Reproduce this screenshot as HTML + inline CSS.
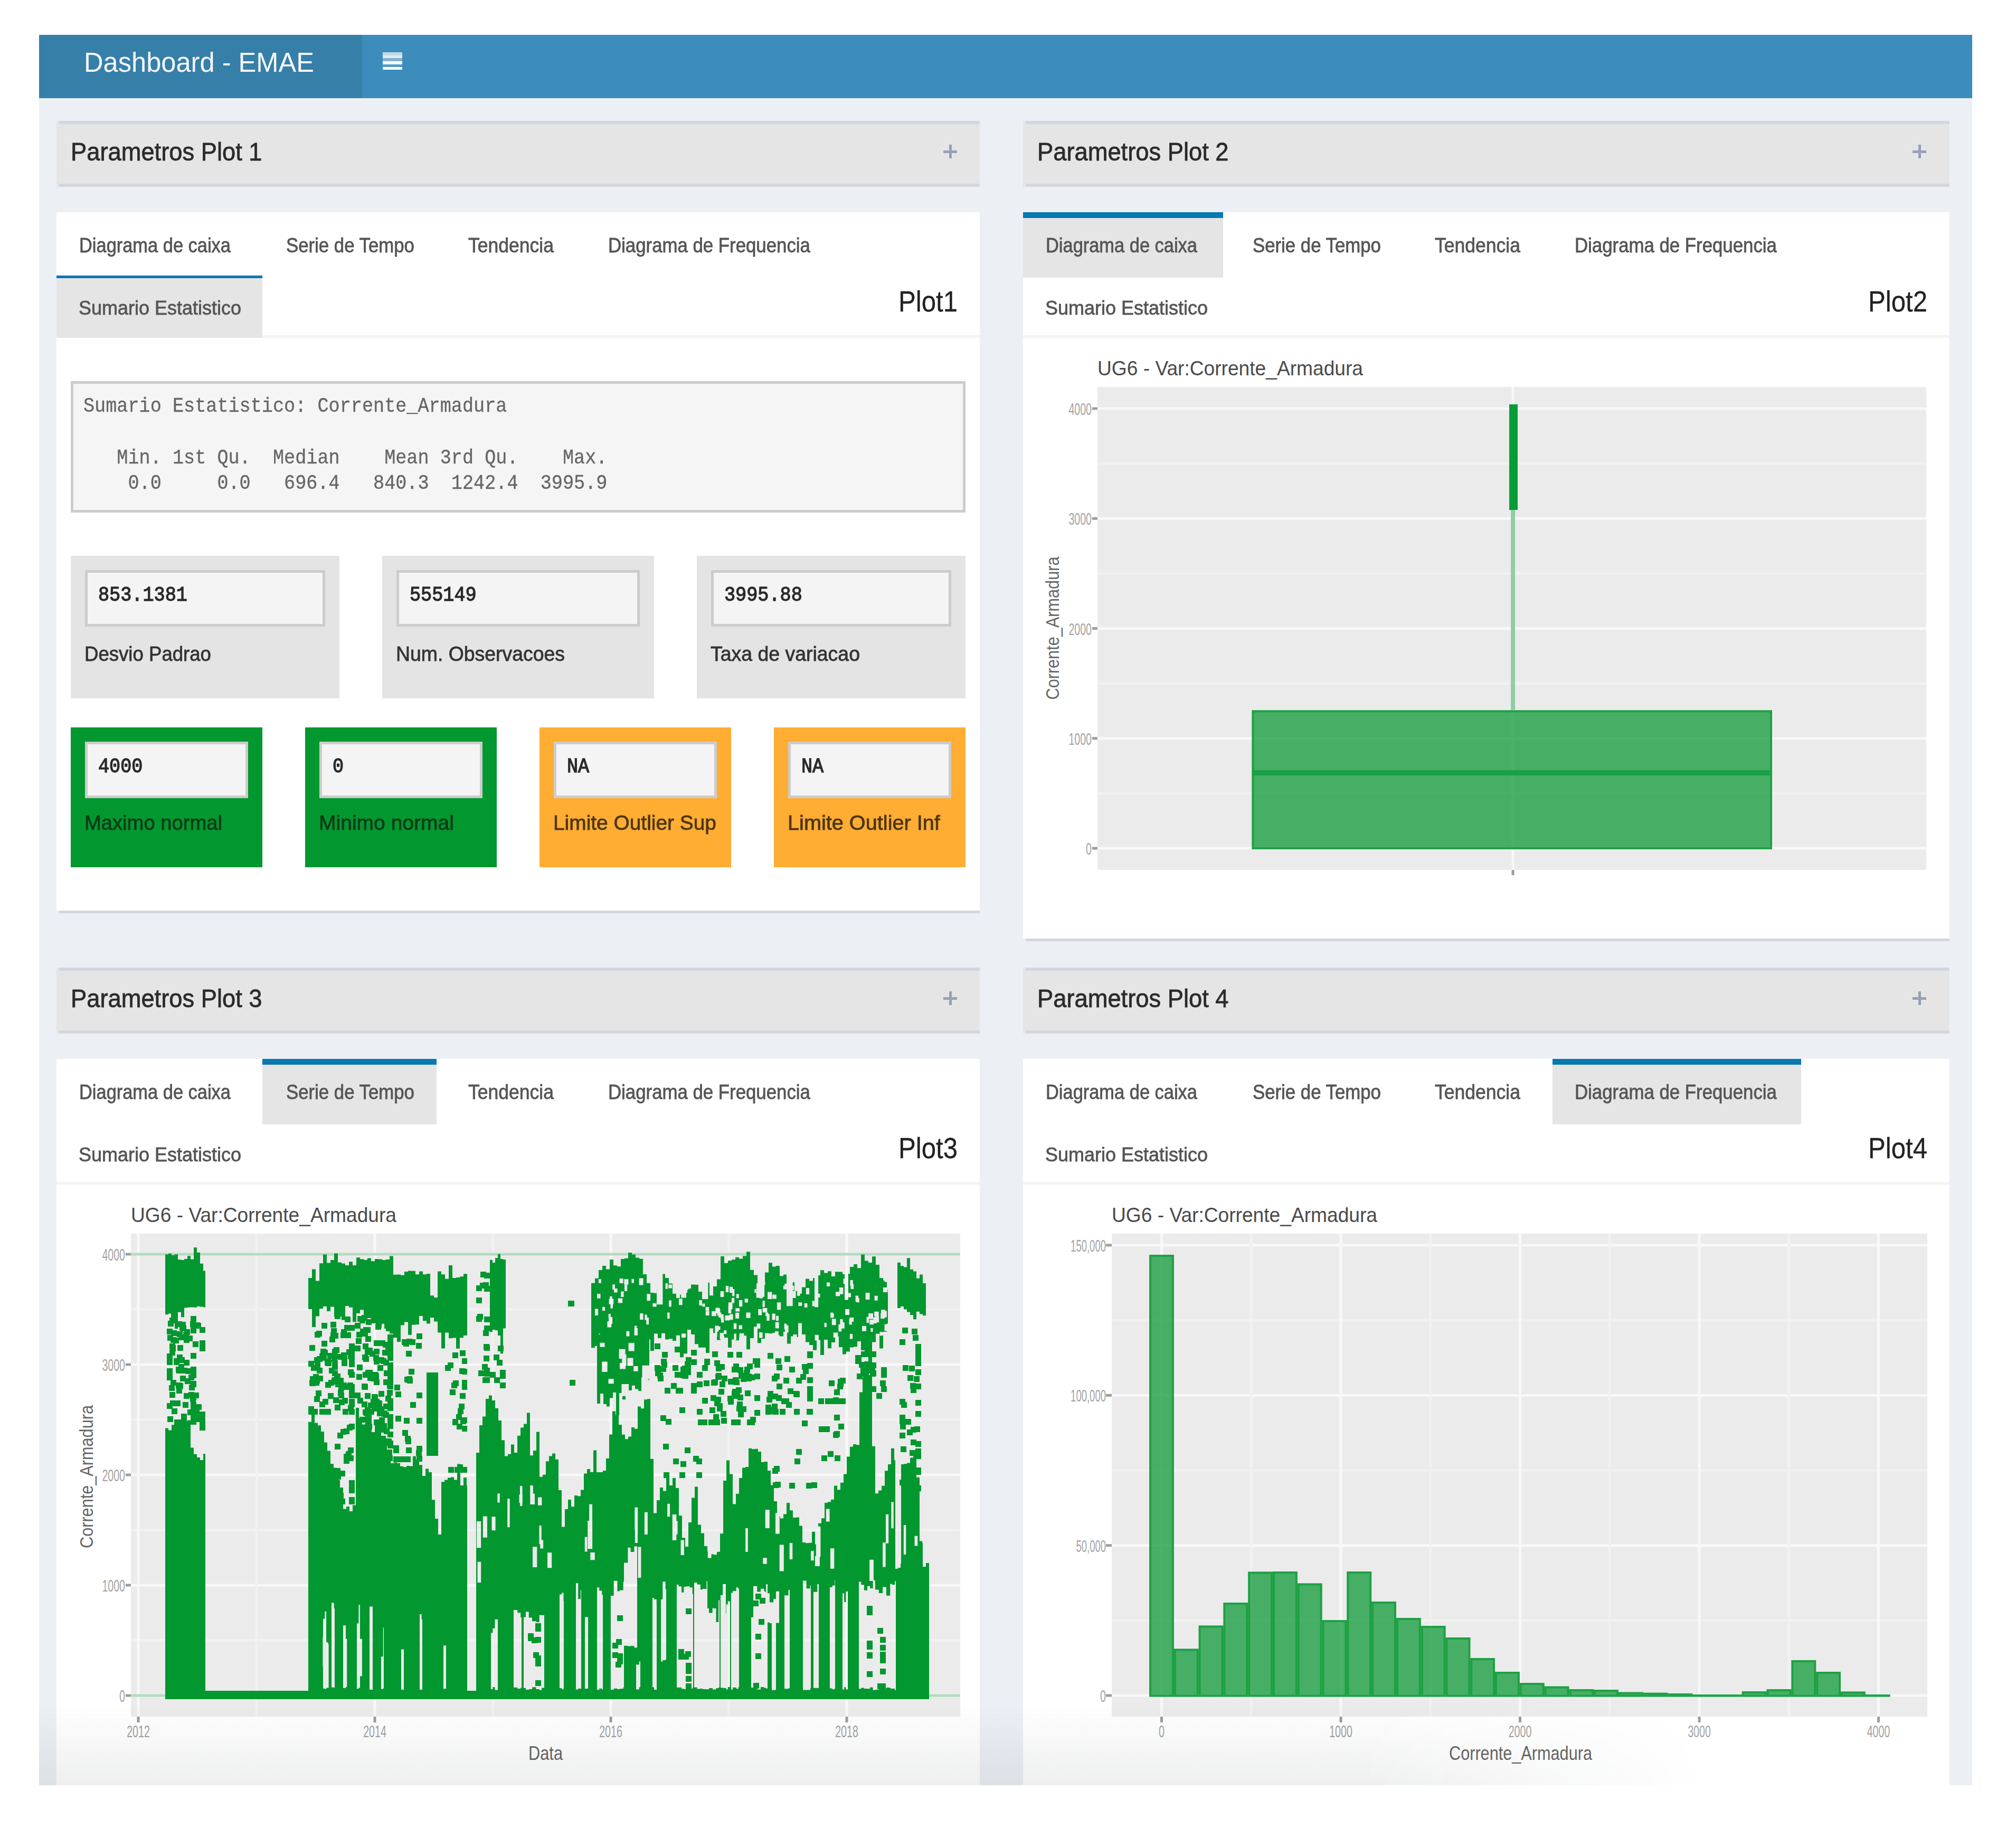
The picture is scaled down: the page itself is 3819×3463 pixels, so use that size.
<!DOCTYPE html>
<html><head><meta charset="utf-8"><title>Dashboard - EMAE</title>
<style>html,body{margin:0;padding:0;background:#ffffff;} body{width:3819px;height:3463px;position:relative;overflow:hidden;font-family:"Liberation Sans", sans-serif;} span{-webkit-text-stroke:0.8px currentColor;} span.m{-webkit-text-stroke:0.3px currentColor;} span.v{-webkit-text-stroke:1.2px currentColor;}</style>
</head><body>
<div style="position:absolute;left:74.0px;top:66.0px;width:612.0px;height:120.0px;background:#367fa9;"></div>
<div style="position:absolute;left:686.0px;top:66.0px;width:3050.0px;height:120.0px;background:#3c8dbc;"></div>
<span style="position:absolute;left:159.0px;top:91.5px;font-family:'Liberation Sans', sans-serif;font-weight:normal;font-size:52.33px;line-height:1;white-space:pre;color:#f4f7fa;transform-origin:0 0;transform:scaleX(0.9672);-webkit-text-stroke:0;">Dashboard - EMAE</span>
<div style="position:absolute;left:725.0px;top:99.0px;width:37.0px;height:5.5px;background:#c3d8e7;"></div>
<div style="position:absolute;left:725.0px;top:104.5px;width:37.0px;height:5.5px;background:#e3ebf2;"></div>
<div style="position:absolute;left:725.0px;top:110.0px;width:37.0px;height:6.0px;background:#80b3d5;"></div>
<div style="position:absolute;left:725.0px;top:116.0px;width:37.0px;height:6.0px;background:#ffffff;"></div>
<div style="position:absolute;left:725.0px;top:122.0px;width:37.0px;height:5.0px;background:#509bc6;"></div>
<div style="position:absolute;left:725.0px;top:127.0px;width:37.0px;height:5.0px;background:#ffffff;"></div>
<div style="position:absolute;left:74.0px;top:186.0px;width:3662.0px;height:3196.0px;background:#ecf0f5;"></div>
<div style="position:absolute;left:107.0px;top:229.0px;width:1749.0px;height:125.0px;background:#e5e5e5;"></div>
<div style="position:absolute;left:112.0px;top:229.0px;width:1744.0px;height:6.0px;background:#d2d6de;"></div>
<div style="position:absolute;left:112.0px;top:348.0px;width:1744.0px;height:6.0px;background:#d4d7dd;"></div>
<span style="position:absolute;left:133.5px;top:264.2px;font-family:'Liberation Sans', sans-serif;font-weight:normal;font-size:47.97px;line-height:1;white-space:pre;color:#2b2b2b;transform-origin:0 0;transform:scaleX(0.9443);">Parametros Plot 1</span>
<div style="position:absolute;left:1787.0px;top:284.5px;width:26.0px;height:5.0px;background:#98a0b3;"></div>
<div style="position:absolute;left:1797.5px;top:274.0px;width:5.0px;height:26.0px;background:#98a0b3;"></div>
<div style="position:absolute;left:107.0px;top:1833.0px;width:1749.0px;height:125.0px;background:#e5e5e5;"></div>
<div style="position:absolute;left:112.0px;top:1833.0px;width:1744.0px;height:6.0px;background:#d2d6de;"></div>
<div style="position:absolute;left:112.0px;top:1952.0px;width:1744.0px;height:6.0px;background:#d4d7dd;"></div>
<span style="position:absolute;left:133.5px;top:1868.2px;font-family:'Liberation Sans', sans-serif;font-weight:normal;font-size:47.97px;line-height:1;white-space:pre;color:#2b2b2b;transform-origin:0 0;transform:scaleX(0.9443);">Parametros Plot 3</span>
<div style="position:absolute;left:1787.0px;top:1888.5px;width:26.0px;height:5.0px;background:#98a0b3;"></div>
<div style="position:absolute;left:1797.5px;top:1878.0px;width:5.0px;height:26.0px;background:#98a0b3;"></div>
<div style="position:absolute;left:1938.0px;top:229.0px;width:1755.0px;height:125.0px;background:#e5e5e5;"></div>
<div style="position:absolute;left:1943.0px;top:229.0px;width:1750.0px;height:6.0px;background:#d2d6de;"></div>
<div style="position:absolute;left:1943.0px;top:348.0px;width:1750.0px;height:6.0px;background:#d4d7dd;"></div>
<span style="position:absolute;left:1964.5px;top:264.2px;font-family:'Liberation Sans', sans-serif;font-weight:normal;font-size:47.97px;line-height:1;white-space:pre;color:#2b2b2b;transform-origin:0 0;transform:scaleX(0.9443);">Parametros Plot 2</span>
<div style="position:absolute;left:3623.0px;top:284.5px;width:26.0px;height:5.0px;background:#98a0b3;"></div>
<div style="position:absolute;left:3633.5px;top:274.0px;width:5.0px;height:26.0px;background:#98a0b3;"></div>
<div style="position:absolute;left:1938.0px;top:1833.0px;width:1755.0px;height:125.0px;background:#e5e5e5;"></div>
<div style="position:absolute;left:1943.0px;top:1833.0px;width:1750.0px;height:6.0px;background:#d2d6de;"></div>
<div style="position:absolute;left:1943.0px;top:1952.0px;width:1750.0px;height:6.0px;background:#d4d7dd;"></div>
<span style="position:absolute;left:1964.5px;top:1868.2px;font-family:'Liberation Sans', sans-serif;font-weight:normal;font-size:47.97px;line-height:1;white-space:pre;color:#2b2b2b;transform-origin:0 0;transform:scaleX(0.9443);">Parametros Plot 4</span>
<div style="position:absolute;left:3623.0px;top:1888.5px;width:26.0px;height:5.0px;background:#98a0b3;"></div>
<div style="position:absolute;left:3633.5px;top:1878.0px;width:5.0px;height:26.0px;background:#98a0b3;"></div>
<div style="position:absolute;left:107.0px;top:402.0px;width:1749.0px;height:1323.0px;background:#ffffff;"></div>
<div style="position:absolute;left:112.0px;top:1725.0px;width:1744.0px;height:5.0px;background:#d2d6de;"></div>
<div style="position:absolute;left:107.0px;top:635.0px;width:1749.0px;height:5.0px;background:#f4f4f4;"></div>
<div style="position:absolute;left:107.0px;top:522.0px;width:390.0px;height:5.0px;background:#0878b0;"></div>
<div style="position:absolute;left:107.0px;top:527.0px;width:390.0px;height:113.0px;background:#e5e5e5;"></div>
<span style="position:absolute;left:150.0px;top:444.6px;font-family:'Liberation Sans', sans-serif;font-weight:normal;font-size:39.24px;line-height:1;white-space:pre;color:#555555;transform-origin:0 0;transform:scaleX(0.8771);">Diagrama de caixa</span>
<span style="position:absolute;left:542.0px;top:444.6px;font-family:'Liberation Sans', sans-serif;font-weight:normal;font-size:39.24px;line-height:1;white-space:pre;color:#555555;transform-origin:0 0;transform:scaleX(0.8863);">Serie de Tempo</span>
<span style="position:absolute;left:887.0px;top:444.6px;font-family:'Liberation Sans', sans-serif;font-weight:normal;font-size:39.24px;line-height:1;white-space:pre;color:#555555;transform-origin:0 0;transform:scaleX(0.9053);">Tendencia</span>
<span style="position:absolute;left:1152.0px;top:444.6px;font-family:'Liberation Sans', sans-serif;font-weight:normal;font-size:39.24px;line-height:1;white-space:pre;color:#555555;transform-origin:0 0;transform:scaleX(0.8867);">Diagrama de Frequencia</span>
<span style="position:absolute;left:149.0px;top:564.9px;font-family:'Liberation Sans', sans-serif;font-weight:normal;font-size:37.79px;line-height:1;white-space:pre;color:#555555;transform-origin:0 0;transform:scaleX(0.9522);">Sumario Estatistico</span>
<span style="position:absolute;left:1702.0px;top:544.1px;font-family:'Liberation Sans', sans-serif;font-weight:normal;font-size:55.23px;line-height:1;white-space:pre;color:#222222;transform-origin:0 0;transform:scaleX(0.8898);-webkit-text-stroke:0.3px #222;">Plot1</span>
<div style="position:absolute;left:1938.0px;top:402.0px;width:1755.0px;height:1376.0px;background:#ffffff;"></div>
<div style="position:absolute;left:1943.0px;top:1778.0px;width:1750.0px;height:5.0px;background:#d2d6de;"></div>
<div style="position:absolute;left:1938.0px;top:635.0px;width:1755.0px;height:5.0px;background:#f4f4f4;"></div>
<div style="position:absolute;left:1938.0px;top:402.0px;width:379.0px;height:11.0px;background:#0878b0;"></div>
<div style="position:absolute;left:1938.0px;top:413.0px;width:379.0px;height:113.0px;background:#e5e5e5;"></div>
<span style="position:absolute;left:1981.0px;top:444.6px;font-family:'Liberation Sans', sans-serif;font-weight:normal;font-size:39.24px;line-height:1;white-space:pre;color:#555555;transform-origin:0 0;transform:scaleX(0.8771);">Diagrama de caixa</span>
<span style="position:absolute;left:2373.0px;top:444.6px;font-family:'Liberation Sans', sans-serif;font-weight:normal;font-size:39.24px;line-height:1;white-space:pre;color:#555555;transform-origin:0 0;transform:scaleX(0.8863);">Serie de Tempo</span>
<span style="position:absolute;left:2718.0px;top:444.6px;font-family:'Liberation Sans', sans-serif;font-weight:normal;font-size:39.24px;line-height:1;white-space:pre;color:#555555;transform-origin:0 0;transform:scaleX(0.9053);">Tendencia</span>
<span style="position:absolute;left:2983.0px;top:444.6px;font-family:'Liberation Sans', sans-serif;font-weight:normal;font-size:39.24px;line-height:1;white-space:pre;color:#555555;transform-origin:0 0;transform:scaleX(0.8867);">Diagrama de Frequencia</span>
<span style="position:absolute;left:1980.0px;top:564.9px;font-family:'Liberation Sans', sans-serif;font-weight:normal;font-size:37.79px;line-height:1;white-space:pre;color:#555555;transform-origin:0 0;transform:scaleX(0.9522);">Sumario Estatistico</span>
<span style="position:absolute;left:3539.0px;top:544.1px;font-family:'Liberation Sans', sans-serif;font-weight:normal;font-size:55.23px;line-height:1;white-space:pre;color:#222222;transform-origin:0 0;transform:scaleX(0.8898);-webkit-text-stroke:0.3px #222;">Plot2</span>
<div style="position:absolute;left:107.0px;top:2006.0px;width:1749.0px;height:1376.0px;background:#ffffff;"></div>
<div style="position:absolute;left:107.0px;top:2239.0px;width:1749.0px;height:5.0px;background:#f4f4f4;"></div>
<div style="position:absolute;left:497.0px;top:2006.0px;width:330.0px;height:11.0px;background:#0878b0;"></div>
<div style="position:absolute;left:497.0px;top:2017.0px;width:330.0px;height:113.0px;background:#e5e5e5;"></div>
<span style="position:absolute;left:150.0px;top:2048.6px;font-family:'Liberation Sans', sans-serif;font-weight:normal;font-size:39.24px;line-height:1;white-space:pre;color:#555555;transform-origin:0 0;transform:scaleX(0.8771);">Diagrama de caixa</span>
<span style="position:absolute;left:542.0px;top:2048.6px;font-family:'Liberation Sans', sans-serif;font-weight:normal;font-size:39.24px;line-height:1;white-space:pre;color:#555555;transform-origin:0 0;transform:scaleX(0.8863);">Serie de Tempo</span>
<span style="position:absolute;left:887.0px;top:2048.6px;font-family:'Liberation Sans', sans-serif;font-weight:normal;font-size:39.24px;line-height:1;white-space:pre;color:#555555;transform-origin:0 0;transform:scaleX(0.9053);">Tendencia</span>
<span style="position:absolute;left:1152.0px;top:2048.6px;font-family:'Liberation Sans', sans-serif;font-weight:normal;font-size:39.24px;line-height:1;white-space:pre;color:#555555;transform-origin:0 0;transform:scaleX(0.8867);">Diagrama de Frequencia</span>
<span style="position:absolute;left:149.0px;top:2168.9px;font-family:'Liberation Sans', sans-serif;font-weight:normal;font-size:37.79px;line-height:1;white-space:pre;color:#555555;transform-origin:0 0;transform:scaleX(0.9522);">Sumario Estatistico</span>
<span style="position:absolute;left:1702.0px;top:2148.1px;font-family:'Liberation Sans', sans-serif;font-weight:normal;font-size:55.23px;line-height:1;white-space:pre;color:#222222;transform-origin:0 0;transform:scaleX(0.8898);-webkit-text-stroke:0.3px #222;">Plot3</span>
<div style="position:absolute;left:1938.0px;top:2006.0px;width:1755.0px;height:1376.0px;background:#ffffff;"></div>
<div style="position:absolute;left:1938.0px;top:2239.0px;width:1755.0px;height:5.0px;background:#f4f4f4;"></div>
<div style="position:absolute;left:2941.0px;top:2006.0px;width:471.0px;height:11.0px;background:#0878b0;"></div>
<div style="position:absolute;left:2941.0px;top:2017.0px;width:471.0px;height:113.0px;background:#e5e5e5;"></div>
<span style="position:absolute;left:1981.0px;top:2048.6px;font-family:'Liberation Sans', sans-serif;font-weight:normal;font-size:39.24px;line-height:1;white-space:pre;color:#555555;transform-origin:0 0;transform:scaleX(0.8771);">Diagrama de caixa</span>
<span style="position:absolute;left:2373.0px;top:2048.6px;font-family:'Liberation Sans', sans-serif;font-weight:normal;font-size:39.24px;line-height:1;white-space:pre;color:#555555;transform-origin:0 0;transform:scaleX(0.8863);">Serie de Tempo</span>
<span style="position:absolute;left:2718.0px;top:2048.6px;font-family:'Liberation Sans', sans-serif;font-weight:normal;font-size:39.24px;line-height:1;white-space:pre;color:#555555;transform-origin:0 0;transform:scaleX(0.9053);">Tendencia</span>
<span style="position:absolute;left:2983.0px;top:2048.6px;font-family:'Liberation Sans', sans-serif;font-weight:normal;font-size:39.24px;line-height:1;white-space:pre;color:#555555;transform-origin:0 0;transform:scaleX(0.8867);">Diagrama de Frequencia</span>
<span style="position:absolute;left:1980.0px;top:2168.9px;font-family:'Liberation Sans', sans-serif;font-weight:normal;font-size:37.79px;line-height:1;white-space:pre;color:#555555;transform-origin:0 0;transform:scaleX(0.9522);">Sumario Estatistico</span>
<span style="position:absolute;left:3539.0px;top:2148.1px;font-family:'Liberation Sans', sans-serif;font-weight:normal;font-size:55.23px;line-height:1;white-space:pre;color:#222222;transform-origin:0 0;transform:scaleX(0.8898);-webkit-text-stroke:0.3px #222;">Plot4</span>
<div style="position:absolute;left:134.0px;top:722.0px;width:1695.0px;height:249.0px;background:#f5f5f5;box-sizing:border-box;border:5px solid #cccccc;"></div>
<span class="m" style="position:absolute;left:158.0px;top:754.2px;font-family:'Liberation Mono', monospace;font-weight:normal;font-size:35.20px;line-height:1;white-space:pre;color:#666666;transform:scaleY(1.08);transform-origin:0 26.8px">Sumario Estatistico: Corrente_Armadura</span>
<span class="m" style="position:absolute;left:158.0px;top:852.2px;font-family:'Liberation Mono', monospace;font-weight:normal;font-size:35.20px;line-height:1;white-space:pre;color:#666666;transform:scaleY(1.08);transform-origin:0 26.8px">   Min. 1st Qu.  Median    Mean 3rd Qu.    Max. </span>
<span class="m" style="position:absolute;left:158.0px;top:900.2px;font-family:'Liberation Mono', monospace;font-weight:normal;font-size:35.20px;line-height:1;white-space:pre;color:#666666;transform:scaleY(1.08);transform-origin:0 26.8px">    0.0     0.0   696.4   840.3  1242.4  3995.9 </span>
<div style="position:absolute;left:134.0px;top:1053.0px;width:509.0px;height:270.0px;background:#e4e4e4;"></div>
<div style="position:absolute;left:161.0px;top:1080.0px;width:455.0px;height:107.0px;background:#f4f4f4;box-sizing:border-box;border:5px solid #cccccc;"></div>
<span class="v" style="position:absolute;left:186.0px;top:1112.2px;font-family:'Liberation Mono', monospace;font-weight:normal;font-size:35.20px;line-height:1;white-space:pre;color:#2a2a2a;transform:scaleY(1.08);transform-origin:0 26.8px">853.1381</span>
<span style="position:absolute;left:160.0px;top:1218.6px;font-family:'Liberation Sans', sans-serif;font-weight:normal;font-size:39.24px;line-height:1;white-space:pre;color:#333333;transform-origin:0 0;transform:scaleX(0.9324);">Desvio Padrao</span>
<div style="position:absolute;left:724.0px;top:1053.0px;width:515.0px;height:270.0px;background:#e4e4e4;"></div>
<div style="position:absolute;left:751.0px;top:1080.0px;width:461.0px;height:107.0px;background:#f4f4f4;box-sizing:border-box;border:5px solid #cccccc;"></div>
<span class="v" style="position:absolute;left:776.0px;top:1112.2px;font-family:'Liberation Mono', monospace;font-weight:normal;font-size:35.20px;line-height:1;white-space:pre;color:#2a2a2a;transform:scaleY(1.08);transform-origin:0 26.8px">555149</span>
<span style="position:absolute;left:750.0px;top:1218.6px;font-family:'Liberation Sans', sans-serif;font-weight:normal;font-size:39.24px;line-height:1;white-space:pre;color:#333333;transform-origin:0 0;transform:scaleX(0.9527);">Num. Observacoes</span>
<div style="position:absolute;left:1320.0px;top:1053.0px;width:509.0px;height:270.0px;background:#e4e4e4;"></div>
<div style="position:absolute;left:1347.0px;top:1080.0px;width:455.0px;height:107.0px;background:#f4f4f4;box-sizing:border-box;border:5px solid #cccccc;"></div>
<span class="v" style="position:absolute;left:1372.0px;top:1112.2px;font-family:'Liberation Mono', monospace;font-weight:normal;font-size:35.20px;line-height:1;white-space:pre;color:#2a2a2a;transform:scaleY(1.08);transform-origin:0 26.8px">3995.88</span>
<span style="position:absolute;left:1346.0px;top:1218.6px;font-family:'Liberation Sans', sans-serif;font-weight:normal;font-size:39.24px;line-height:1;white-space:pre;color:#333333;transform-origin:0 0;transform:scaleX(0.9539);">Taxa de variacao</span>
<div style="position:absolute;left:134.0px;top:1378.0px;width:363.0px;height:265.0px;background:#03972f;"></div>
<div style="position:absolute;left:161.0px;top:1405.0px;width:309.0px;height:107.0px;background:#f4f4f4;box-sizing:border-box;border:5px solid #cccccc;"></div>
<span class="v" style="position:absolute;left:186.0px;top:1437.2px;font-family:'Liberation Mono', monospace;font-weight:normal;font-size:35.20px;line-height:1;white-space:pre;color:#2a2a2a;transform:scaleY(1.08);transform-origin:0 26.8px">4000</span>
<span style="position:absolute;left:160.0px;top:1538.6px;font-family:'Liberation Sans', sans-serif;font-weight:normal;font-size:39.24px;line-height:1;white-space:pre;color:#0b3d19;transform-origin:0 0;transform:scaleX(0.9730);">Maximo normal</span>
<div style="position:absolute;left:578.0px;top:1378.0px;width:363.0px;height:265.0px;background:#03972f;"></div>
<div style="position:absolute;left:605.0px;top:1405.0px;width:309.0px;height:107.0px;background:#f4f4f4;box-sizing:border-box;border:5px solid #cccccc;"></div>
<span class="v" style="position:absolute;left:630.0px;top:1437.2px;font-family:'Liberation Mono', monospace;font-weight:normal;font-size:35.20px;line-height:1;white-space:pre;color:#2a2a2a;transform:scaleY(1.08);transform-origin:0 26.8px">0</span>
<span style="position:absolute;left:604.0px;top:1538.6px;font-family:'Liberation Sans', sans-serif;font-weight:normal;font-size:39.24px;line-height:1;white-space:pre;color:#0b3d19;transform-origin:0 0;transform:scaleX(0.9949);">Minimo normal</span>
<div style="position:absolute;left:1022.0px;top:1378.0px;width:363.0px;height:265.0px;background:#ffad33;"></div>
<div style="position:absolute;left:1049.0px;top:1405.0px;width:309.0px;height:107.0px;background:#f4f4f4;box-sizing:border-box;border:5px solid #cccccc;"></div>
<span class="v" style="position:absolute;left:1074.0px;top:1437.2px;font-family:'Liberation Mono', monospace;font-weight:normal;font-size:35.20px;line-height:1;white-space:pre;color:#2a2a2a;transform:scaleY(1.08);transform-origin:0 26.8px">NA</span>
<span style="position:absolute;left:1048.0px;top:1538.6px;font-family:'Liberation Sans', sans-serif;font-weight:normal;font-size:39.24px;line-height:1;white-space:pre;color:#4d3510;transform-origin:0 0;transform:scaleX(0.9907);">Limite Outlier Sup</span>
<div style="position:absolute;left:1466.0px;top:1378.0px;width:363.0px;height:265.0px;background:#ffad33;"></div>
<div style="position:absolute;left:1493.0px;top:1405.0px;width:309.0px;height:107.0px;background:#f4f4f4;box-sizing:border-box;border:5px solid #cccccc;"></div>
<span class="v" style="position:absolute;left:1518.0px;top:1437.2px;font-family:'Liberation Mono', monospace;font-weight:normal;font-size:35.20px;line-height:1;white-space:pre;color:#2a2a2a;transform:scaleY(1.08);transform-origin:0 26.8px">NA</span>
<span style="position:absolute;left:1492.0px;top:1538.6px;font-family:'Liberation Sans', sans-serif;font-weight:normal;font-size:39.24px;line-height:1;white-space:pre;color:#4d3510;transform-origin:0 0;transform:scaleX(1.0113);">Limite Outlier Inf</span>
<svg width="3819" height="3463" style="position:absolute;left:0;top:0" font-family="Liberation Sans, sans-serif"><rect x="2079.0" y="733.0" width="1570.0" height="915.0" fill="#ebebeb" />
<rect x="2079.0" y="1500.4" width="1570.0" height="5.0" fill="#f1f1f1" />
<rect x="2079.0" y="1292.1" width="1570.0" height="5.0" fill="#f1f1f1" />
<rect x="2079.0" y="1083.9" width="1570.0" height="5.0" fill="#f1f1f1" />
<rect x="2079.0" y="875.6" width="1570.0" height="5.0" fill="#f1f1f1" />
<rect x="2079.0" y="1604.5" width="1570.0" height="5.0" fill="#f8f8f8" />
<rect x="2079.0" y="1396.2" width="1570.0" height="5.0" fill="#f8f8f8" />
<rect x="2079.0" y="1188.0" width="1570.0" height="5.0" fill="#f8f8f8" />
<rect x="2079.0" y="979.8" width="1570.0" height="5.0" fill="#f8f8f8" />
<rect x="2079.0" y="771.5" width="1570.0" height="5.0" fill="#f8f8f8" />
<rect x="2863.5" y="733.0" width="5.0" height="915.0" fill="#f8f8f8" />
<text x="2068.0" y="1619.0" font-size="30.71" fill="#a3a3a3" text-anchor="end" textLength="10.9" lengthAdjust="spacingAndGlyphs" >0</text>
<rect x="2069.0" y="1604.5" width="10.0" height="5.0" fill="#9d9d9d" />
<text x="2068.0" y="1410.8" font-size="30.71" fill="#a3a3a3" text-anchor="end" textLength="43.6" lengthAdjust="spacingAndGlyphs" >1000</text>
<rect x="2069.0" y="1396.2" width="10.0" height="5.0" fill="#9d9d9d" />
<text x="2068.0" y="1202.5" font-size="30.71" fill="#a3a3a3" text-anchor="end" textLength="43.6" lengthAdjust="spacingAndGlyphs" >2000</text>
<rect x="2069.0" y="1188.0" width="10.0" height="5.0" fill="#9d9d9d" />
<text x="2068.0" y="994.2" font-size="30.71" fill="#a3a3a3" text-anchor="end" textLength="43.6" lengthAdjust="spacingAndGlyphs" >3000</text>
<rect x="2069.0" y="979.8" width="10.0" height="5.0" fill="#9d9d9d" />
<text x="2068.0" y="786.0" font-size="30.71" fill="#a3a3a3" text-anchor="end" textLength="43.6" lengthAdjust="spacingAndGlyphs" >4000</text>
<rect x="2069.0" y="771.5" width="10.0" height="5.0" fill="#9d9d9d" />
<rect x="2863.5" y="1648.0" width="5.0" height="10.0" fill="#9d9d9d" />
<rect x="2371.5" y="1345.5" width="985.5" height="263.5" fill="#03972f" fill-opacity="0.71"/>
<rect x="2373.5" y="1347.5" width="981.5" height="259.5" fill="none" stroke="#03972f" stroke-opacity="0.6" stroke-width="4"/>
<rect x="2371.5" y="1459.0" width="985.5" height="10.0" fill="#1aa046" />
<rect x="2862.0" y="966.0" width="8.0" height="379.5" fill="#8fcea2" />
<rect x="2859.0" y="766.0" width="16.0" height="200.0" fill="#069c36" />
<text x="2079.0" y="711.0" font-size="39.00" fill="#4a4a4a" text-anchor="start" textLength="503.0" lengthAdjust="spacingAndGlyphs" >UG6 - Var:Corrente_Armadura</text>
<text transform="translate(2006.0,1190.0) rotate(-90)" x="0" y="0" font-size="35.00" fill="#666666" text-anchor="middle" textLength="271.0" lengthAdjust="spacingAndGlyphs">Corrente_Armadura</text>
<rect x="248.0" y="2337.0" width="1571.0" height="915.0" fill="#ebebeb" />
<rect x="248.0" y="3105.0" width="1571.0" height="5.0" fill="#f1f1f1" />
<rect x="248.0" y="2896.0" width="1571.0" height="5.0" fill="#f1f1f1" />
<rect x="248.0" y="2687.0" width="1571.0" height="5.0" fill="#f1f1f1" />
<rect x="248.0" y="2478.0" width="1571.0" height="5.0" fill="#f1f1f1" />
<rect x="248.0" y="3209.5" width="1571.0" height="5.0" fill="#f8f8f8" />
<rect x="248.0" y="3000.5" width="1571.0" height="5.0" fill="#f8f8f8" />
<rect x="248.0" y="2791.5" width="1571.0" height="5.0" fill="#f8f8f8" />
<rect x="248.0" y="2582.5" width="1571.0" height="5.0" fill="#f8f8f8" />
<rect x="248.0" y="2373.5" width="1571.0" height="5.0" fill="#f8f8f8" />
<rect x="483.5" y="2337.0" width="5.0" height="915.0" fill="#f1f1f1" />
<rect x="931.0" y="2337.0" width="5.0" height="915.0" fill="#f1f1f1" />
<rect x="1378.0" y="2337.0" width="5.0" height="915.0" fill="#f1f1f1" />
<rect x="259.5" y="2337.0" width="5.0" height="915.0" fill="#f8f8f8" />
<rect x="707.5" y="2337.0" width="5.0" height="915.0" fill="#f8f8f8" />
<rect x="1154.5" y="2337.0" width="5.0" height="915.0" fill="#f8f8f8" />
<rect x="1601.5" y="2337.0" width="5.0" height="915.0" fill="#f8f8f8" />
<text x="237.0" y="3224.0" font-size="30.71" fill="#a3a3a3" text-anchor="end" textLength="10.9" lengthAdjust="spacingAndGlyphs" >0</text>
<rect x="238.0" y="3209.5" width="10.0" height="5.0" fill="#9d9d9d" />
<text x="237.0" y="3015.0" font-size="30.71" fill="#a3a3a3" text-anchor="end" textLength="43.6" lengthAdjust="spacingAndGlyphs" >1000</text>
<rect x="238.0" y="3000.5" width="10.0" height="5.0" fill="#9d9d9d" />
<text x="237.0" y="2806.0" font-size="30.71" fill="#a3a3a3" text-anchor="end" textLength="43.6" lengthAdjust="spacingAndGlyphs" >2000</text>
<rect x="238.0" y="2791.5" width="10.0" height="5.0" fill="#9d9d9d" />
<text x="237.0" y="2597.0" font-size="30.71" fill="#a3a3a3" text-anchor="end" textLength="43.6" lengthAdjust="spacingAndGlyphs" >3000</text>
<rect x="238.0" y="2582.5" width="10.0" height="5.0" fill="#9d9d9d" />
<text x="237.0" y="2388.0" font-size="30.71" fill="#a3a3a3" text-anchor="end" textLength="43.6" lengthAdjust="spacingAndGlyphs" >4000</text>
<rect x="238.0" y="2373.5" width="10.0" height="5.0" fill="#9d9d9d" />
<rect x="259.5" y="3252.0" width="5.0" height="11.0" fill="#9d9d9d" />
<text x="262.0" y="3291.0" font-size="30.71" fill="#a3a3a3" text-anchor="middle" textLength="43.6" lengthAdjust="spacingAndGlyphs" >2012</text>
<rect x="707.5" y="3252.0" width="5.0" height="11.0" fill="#9d9d9d" />
<text x="710.0" y="3291.0" font-size="30.71" fill="#a3a3a3" text-anchor="middle" textLength="43.6" lengthAdjust="spacingAndGlyphs" >2014</text>
<rect x="1154.5" y="3252.0" width="5.0" height="11.0" fill="#9d9d9d" />
<text x="1157.0" y="3291.0" font-size="30.71" fill="#a3a3a3" text-anchor="middle" textLength="43.6" lengthAdjust="spacingAndGlyphs" >2016</text>
<rect x="1601.5" y="3252.0" width="5.0" height="11.0" fill="#9d9d9d" />
<text x="1604.0" y="3291.0" font-size="30.71" fill="#a3a3a3" text-anchor="middle" textLength="43.6" lengthAdjust="spacingAndGlyphs" >2018</text>
<text x="248.0" y="2315.0" font-size="39.00" fill="#4a4a4a" text-anchor="start" textLength="503.0" lengthAdjust="spacingAndGlyphs" >UG6 - Var:Corrente_Armadura</text>
<text x="1033.5" y="3333.5" font-size="36.50" fill="#666666" text-anchor="middle" textLength="65.0" lengthAdjust="spacingAndGlyphs" >Data</text>
<text transform="translate(175.5,2797.5) rotate(-90)" x="0" y="0" font-size="35.00" fill="#666666" text-anchor="middle" textLength="271.0" lengthAdjust="spacingAndGlyphs">Corrente_Armadura</text>
<rect x="248" y="2373.5" width="1571" height="5" fill="#b3dcbf"/><rect x="248" y="3209.5" width="1571" height="5" fill="#b3dcbf"/>
<mask id="scm" maskUnits="userSpaceOnUse" x="240" y="2330" width="1590" height="930"><rect x="240" y="2330" width="1590" height="930" fill="#fff"/><path fill="#000" d="M615.8 3114.5h6.8v83.1h-6.8zM611.4 3100.9h5.9v55.9h-5.9zM616.5 3111.3h5.1v55.2h-5.1zM614.7 3108.8h3.5v69.1h-3.5zM681.8 3104.7h4.1v70.6h-4.1zM650.8 3104.7h6.4v91.3h-6.4zM885.0 2337.0H902.0V3203.0H885.0zM930.0 3093.5H933.5V3200.1H930.0zM933.5 3084.8H937.5V3196.1H933.5zM937.5 3067.8H943.0V3201.6H937.5zM973.0 3050.1H980.3V3196.8H973.0zM980.3 3055.3H986.2V3199.0H980.3zM986.2 3064.0H988.0V3197.2H986.2zM992.0 3063.6H996.1V3197.8H992.0zM996.1 3053.5H1001.7V3200.9H996.1zM1001.7 3064.6H1008.0V3200.0H1001.7zM1008.0 3071.3H1015.6V3196.3H1008.0zM1015.6 3072.9H1021.7V3200.0H1015.6zM1021.7 3059.7H1026.1V3201.8H1021.7zM1026.1 3060.1H1031.0V3197.5H1026.1zM1091.0 2999.0H1095.2V3200.6H1091.0zM1095.2 3029.3H1099.9V3198.8H1095.2zM1099.9 3012.2H1101.0V3199.6H1099.9zM1131.0 3007.2H1135.2V3201.3H1131.0zM1135.2 3013.6H1140.3V3198.7H1135.2zM1140.3 3021.2H1142.0V3200.5H1140.3zM1157.0 3022.9H1162.7V3200.9H1157.0zM1162.7 2994.7H1169.5V3198.7H1162.7zM1169.5 3014.6H1173.9V3200.1H1169.5zM1173.9 3012.4H1180.7V3199.3H1173.9zM1180.7 2996.2H1182.0V3196.3H1180.7zM1182.0 2960.5H1189.4V3117.8H1182.0zM1189.4 2931.8H1194.6V3118.6H1189.4zM1194.6 2940.1H1201.4V3117.9H1194.6zM1201.4 2929.4H1207.0V3121.2H1201.4zM1252.0 3030.1H1255.3V3147.7H1252.0zM1255.3 2996.2H1260.6V3144.9H1255.3zM1260.6 3010.6H1262.0V3144.1H1260.6zM1282.0 3002.1H1285.6V3196.8H1282.0zM1285.6 3005.3H1291.1V3196.7H1285.6zM1291.1 3016.7H1295.4V3199.3H1291.1zM1295.4 3006.1H1300.3V3200.1H1295.4zM1300.3 3005.3H1306.4V3197.4H1300.3zM1306.4 3007.2H1311.7V3199.3H1306.4zM1311.7 3019.9H1313.0V3197.3H1311.7zM1338.0 3047.1H1343.0V3200.2H1338.0zM1343.0 3055.5H1349.6V3198.0H1343.0zM1349.6 3046.6H1352.0V3197.4H1349.6zM1370.0 3056.4H1375.7V3197.7H1370.0zM1375.7 3039.5H1378.8V3200.4H1375.7zM1378.8 3033.6H1383.0V3196.0H1378.8zM1423.0 3063.7H1427.0V3197.1H1423.0zM1427.0 3004.7H1434.2V3197.7H1427.0zM1434.2 3015.4H1441.0V3200.5H1434.2zM1441.0 3009.8H1447.5V3196.1H1441.0zM1447.5 3016.4H1451.2V3197.6H1447.5zM1451.2 3001.2H1454.0V3198.8H1451.2zM1315.0 2998.0H1320.5V3196.6H1315.0zM1320.5 3001.7H1326.8V3199.5H1320.5zM1326.8 3011.2H1330.5V3198.8H1326.8zM1330.5 3010.1H1338.5V3199.9H1330.5zM1338.5 2995.3H1340.0V3197.8H1338.5zM1350.0 3046.9H1356.5V3200.4H1350.0zM1356.5 3073.1H1361.2V3198.1H1356.5zM1361.2 3031.3H1363.0V3196.4H1361.2zM1365.0 3021.8H1369.2V3197.2H1365.0zM1369.2 3000.9H1375.0V3197.8H1369.2zM1385.0 3017.6H1388.1V3200.7H1385.0zM1388.1 3014.0H1394.7V3196.7H1388.1zM1394.7 3007.2H1398.7V3199.3H1394.7zM1398.7 3010.1H1400.0V3196.1H1398.7zM1446.0 3014.7H1450.1V3075.1H1446.0zM1450.1 3018.2H1457.9V3073.4H1450.1zM1457.9 3035.5H1465.1V3075.0H1457.9zM1465.1 3029.2H1469.9V3070.7H1465.1zM1469.9 3014.8H1476.0V3074.6H1469.9zM1521.0 2994.4H1527.6V3201.6H1521.0zM1527.6 3009.3H1534.8V3201.4H1527.6zM1534.8 3003.6H1536.0V3198.4H1534.8zM1541.0 3015.7H1548.3V3197.8H1541.0zM1548.3 3001.2H1551.0V3197.8H1548.3zM1572.0 3007.0H1576.6V3198.6H1572.0zM1576.6 3003.8H1581.4V3200.2H1576.6zM1581.4 2993.5H1582.0V3198.4H1581.4zM1627.0 2996.4H1631.3V3199.2H1627.0zM1631.3 3002.4H1636.9V3197.5H1631.3zM1636.9 3012.8H1643.0V3199.0H1636.9zM1643.0 3004.7H1648.1V3199.2H1643.0zM1648.1 3009.0H1653.7V3196.6H1648.1zM1653.7 2993.7H1657.8V3201.8H1653.7zM1657.8 3011.6H1664.8V3200.9H1657.8zM1664.8 3018.1H1672.2V3197.8H1664.8zM1672.2 3006.6H1678.9V3198.7H1672.2zM1678.9 3022.7H1686.3V3197.0H1678.9zM1686.3 3000.4H1689.7V3198.7H1686.3zM1689.7 3002.3H1695.2V3198.9H1689.7zM1695.2 2995.3H1697.0V3201.9H1695.2zM1697.0 2340.7H1700.7V2965.3H1697.0zM1700.7 2357.2H1706.6V2961.4H1700.7zM1706.6 2346.5H1707.0V2963.2H1706.6zM1486.0 3022.2H1493.5V3199.3H1486.0zM1493.5 3012.1H1496.0V3198.2H1493.5zM1596.0 3018.6H1599.1V3200.7H1596.0zM1599.1 3034.9H1602.5V3196.3H1599.1zM1602.5 3015.0H1606.0V3200.4H1602.5zM1462.0 3053.7H1469.1V3201.7H1462.0zM1469.1 3055.9H1470.0V3200.8H1469.1zM1236.0 3026.9H1239.1V3196.3H1236.0zM1239.1 3029.8H1243.8V3200.9H1239.1zM1243.8 3040.5H1244.0V3201.7H1243.8zM1205.0 3153.5H1210.8V3200.5H1205.0zM1210.8 3147.6H1213.0V3196.2H1210.8zM1060.0 3020.4H1064.2V3198.0H1060.0zM1064.2 3017.6H1067.5V3200.3H1064.2zM1067.5 3033.0H1068.0V3198.0H1067.5zM1108.0 3063.5H1114.0V3199.0H1108.0zM612.0 3066.8H615.3V3198.8H612.0zM615.3 3052.8H618.0V3199.8H615.3zM628.0 3036.4H632.7V3196.5H628.0zM632.7 3047.0H634.0V3197.4H632.7zM650.0 3079.2H655.0V3197.7H650.0zM676.0 3075.5H679.4V3199.2H676.0zM679.4 3040.6H682.0V3197.4H679.4zM700.0 3043.5H706.0V3201.1H700.0zM722.0 3138.2H725.8V3199.7H722.0zM725.8 3083.4H727.0V3198.4H725.8zM760.0 3124.6H765.0V3200.9H760.0zM795.0 3058.0H798.6V3201.0H795.0zM798.6 3068.1H800.0V3201.1H798.6zM840.0 3117.2H845.0V3199.2H840.0zM1711.9 2888.9h4.4v56.2h-4.4zM1672.1 2922.3h5.6v46.2h-5.6zM1021.5 2890.0h4.2v35.2h-4.2zM1113.3 2881.0h8.8v53.2h-8.8zM1536.0 2937.9h5.6v18.4h-5.6zM1495.6 2923.0h5.7v31.0h-5.7zM983.5 2831.2h6.3v15.9h-6.3zM1449.7 2860.2h8.1v34.8h-8.1zM1732.5 2909.7h5.8v18.8h-5.8zM1412.2 2895.0h4.6v45.1h-4.6zM1647.1 2954.7h7.8v40.4h-7.8zM1220.9 2864.7h6.0v42.4h-6.0zM1202.4 2855.5h5.8v42.4h-5.8zM1476.6 2926.6h8.2v50.0h-8.2zM1116.1 2849.8h5.9v42.1h-5.9zM1688.3 2845.4h4.5v49.9h-4.5zM1023.2 2917.5h5.9v15.9h-5.9zM1118.3 2941.0h8.5v14.2h-8.5zM1202.9 2869.2h5.1v53.9h-5.1zM1264.1 2848.8h5.0v24.5h-5.0zM1445.2 2951.3h7.6v11.5h-7.6zM1004.2 2814.0h5.6v19.6h-5.6zM914.9 2872.5h8.0v40.2h-8.0zM931.6 2873.3h7.0v26.0h-7.0zM1208.6 2930.4h5.8v58.6h-5.8zM1009.0 2930.3h8.3v38.7h-8.3zM985.0 2815.0h4.5v37.9h-4.5zM1747.1 2905.3h6.1v17.8h-6.1zM1545.9 2891.8h8.5v57.8h-8.5zM1472.1 2823.9h6.4v48.9h-6.4zM1340.8 2920.8h6.7v30.7h-6.7zM1572.9 2933.3h7.4v38.5h-7.4zM942.3 2829.3h4.5v17.3h-4.5zM1274.8 2881.2h8.8v25.5h-8.8zM1564.8 2858.4h6.8v24.0h-6.8zM903.0 2882.1h8.2v50.2h-8.2zM961.2 2839.0h4.5v54.2h-4.5zM1469.0 2866.3h7.8v39.5h-7.8zM1295.7 2846.3h6.6v20.2h-6.6zM1019.0 2836.5h7.4v15.3h-7.4zM904.5 2958.8h6.7v39.1h-6.7zM1037.0 2941.2h8.2v29.0h-8.2zM1544.0 2948.1h8.9v18.9h-8.9zM1004.3 2829.5h8.7v20.4h-8.7zM1678.0 2868.7h5.2v55.0h-5.2zM1107.8 2911.8h4.6v27.6h-4.6zM1273.7 2869.1h7.6v48.8h-7.6zM1289.6 2917.5h6.3v28.5h-6.3z"/></mask>
<path fill="#03972f" mask="url(#scm)" d="M313.0 3203.0H1760.0V3219.0H313.0zM313.0 2705.5h6.0V3219h-6.0zM319.0 2709.5h6.0V3219h-6.0zM325.0 2699.3h6.0V3219h-6.0zM331.0 2692.0h6.0V3219h-6.0zM337.0 2697.6h6.0V3219h-6.0zM343.0 2687.5h6.0V3219h-6.0zM349.0 2692.5h6.0V3219h-6.0zM355.0 2690.5h6.0V3219h-6.0zM361.0 2742.4h6.0V3219h-6.0zM367.0 2754.8h6.0V3219h-6.0zM373.0 2761.0h6.0V3219h-6.0zM379.0 2766.0h6.0V3219h-6.0zM385.0 2754.2h4.0V3219h-4.0zM313.0 2376.3h6.0V2490.2h-6.0zM319.0 2374.8h6.0V2488.5h-6.0zM325.0 2377.7h6.0V2495.7h-6.0zM331.0 2376.3h6.0V2517.2h-6.0zM337.0 2386.3h6.0V2485.7h-6.0zM343.0 2387.0h6.0V2495.2h-6.0zM349.0 2385.1h6.0V2477.5h-6.0zM355.0 2379.2h6.0V2476.8h-6.0zM361.0 2385.8h6.0V2476.4h-6.0zM367.0 2363.3h6.0V2476.7h-6.0zM373.0 2372.8h6.0V2474.7h-6.0zM379.0 2393.7h6.0V2475.4h-6.0zM385.0 2407.6h4.0V2476.4h-4.0zM339 2571h11v11h-11zM361 2656h11v11h-11zM340 2510h11v11h-11zM361 2595h11v11h-11zM352 2592h11v11h-11zM361 2515h11v11h-11zM360 2645h11v11h-11zM328 2534h11v11h-11zM336 2548h11v11h-11zM361 2589h11v11h-11zM350 2611h11v11h-11zM349 2518h11v11h-11zM316 2575h11v11h-11zM348 2576h11v11h-11zM323 2533h11v11h-11zM316 2604h11v11h-11zM357 2637h11v11h-11zM361 2563h11v11h-11zM361 2673h11v11h-11zM361 2667h11v11h-11zM334 2689h11v11h-11zM320 2624h11v11h-11zM361 2642h11v11h-11zM321 2496h11v11h-11zM357 2604h11v11h-11zM361 2593h11v11h-11zM322 2653h11v11h-11zM343 2678h11v11h-11zM317 2683h11v11h-11zM324 2488h11v11h-11zM334 2629h11v11h-11zM329 2573h11v11h-11zM316 2564h11v11h-11zM330 2689h11v11h-11zM318 2502h11v11h-11zM361 2512h11v11h-11zM335 2522h11v11h-11zM337 2689h11v11h-11zM341 2504h11v11h-11zM361 2600h11v11h-11zM348 2533h11v11h-11zM339 2528h11v11h-11zM331 2653h11v11h-11zM361 2512h11v11h-11zM322 2548h11v11h-11zM354 2530h11v11h-11zM316 2658h11v11h-11zM333 2589h11v11h-11zM342 2511h11v11h-11zM325 2668h11v11h-11zM329 2575h11v11h-11zM338 2584h11v11h-11zM316 2594h11v11h-11zM361 2688h11v11h-11zM355 2670h11v11h-11zM361 2684h11v11h-11zM360 2503h11v11h-11zM346 2656h11v11h-11zM334 2503h11v11h-11zM321 2637h11v11h-11zM333 2619h11v11h-11zM334 2591h11v11h-11zM324 2520h11v11h-11zM316 2517h11v11h-11zM316 2598h11v11h-11zM341 2606h11v11h-11zM347 2523h11v11h-11zM336 2620h11v11h-11zM361 2617h11v11h-11zM339 2689h11v11h-11zM322 2549h11v11h-11zM358 2623h11v11h-11zM316 2592h11v11h-11zM361 2616h11v11h-11zM344 2591h11v11h-11zM321 2545h11v11h-11zM323 2614h11v11h-11zM335 2566h11v11h-11zM317 2529h11v11h-11zM343 2689h11v11h-11zM348 2639h11v11h-11zM321 2557h11v11h-11zM361 2493h11v11h-11zM378 2549h11v11h-11zM365 2541h11v11h-11zM378 2514h11v11h-11zM378 2549h11v11h-11zM378 2539h11v11h-11zM370 2506h11v11h-11zM368 2505h11v11h-11zM370 2677h11v11h-11zM367 2671h11v11h-11zM378 2688h11v11h-11zM377 2682h11v11h-11zM371 2660h11v11h-11zM378 2699h11v11h-11zM378 2674h11v11h-11zM378 2699h11v11h-11zM378 2686h11v11h-11zM367 2683h11v11h-11zM378 2692h11v11h-11zM366 2638h11v11h-11zM584.0 2420.9h7.0V2479.9h-7.0zM591.0 2404.6h7.0V2514.0h-7.0zM598.0 2426.5h7.0V2493.6h-7.0zM605.0 2393.3h7.0V2479.2h-7.0zM612.0 2376.5h7.0V2474.8h-7.0zM619.0 2392.6h7.0V2483.9h-7.0zM626.0 2386.9h7.0V2475.4h-7.0zM633.0 2374.4h7.0V2494.8h-7.0zM640.0 2391.6h7.0V2494.1h-7.0zM647.0 2393.6h7.0V2500.8h-7.0zM654.0 2397.0h7.0V2473.9h-7.0zM661.0 2390.2h7.0V2476.7h-7.0zM668.0 2397.1h7.0V2504.3h-7.0zM675.0 2382.3h7.0V2487.9h-7.0zM682.0 2385.2h7.0V2481.6h-7.0zM689.0 2386.7h7.0V2499.5h-7.0zM696.0 2383.6h7.0V2497.0h-7.0zM703.0 2389.3h7.0V2506.9h-7.0zM710.0 2384.9h7.0V2507.0h-7.0zM717.0 2385.4h7.0V2508.8h-7.0zM724.0 2387.0h7.0V2507.8h-7.0zM731.0 2386.0h7.0V2521.9h-7.0zM738.0 2379.6h7.0V2526.5h-7.0zM745.0 2414.7h7.0V2534.1h-7.0zM752.0 2414.6h7.0V2542.1h-7.0zM759.0 2415.7h7.0V2510.5h-7.0zM766.0 2408.9h7.0V2504.4h-7.0zM773.0 2407.4h7.0V2528.7h-7.0zM780.0 2407.7h7.0V2509.7h-7.0zM787.0 2414.2h7.0V2509.3h-7.0zM794.0 2408.5h7.0V2493.1h-7.0zM801.0 2414.3h7.0V2502.2h-7.0zM808.0 2413.0h7.0V2507.4h-7.0zM815.0 2454.3h7.0V2496.3h-7.0zM822.0 2458.0h7.0V2503.6h-7.0zM829.0 2408.4h7.0V2524.5h-7.0zM836.0 2414.3h7.0V2554.4h-7.0zM843.0 2422.8h7.0V2524.5h-7.0zM850.0 2397.0h7.0V2535.3h-7.0zM857.0 2420.9h7.0V2534.5h-7.0zM864.0 2420.0h7.0V2554.7h-7.0zM871.0 2418.2h7.0V2534.2h-7.0zM878.0 2413.2h7.0V2529.9h-7.0zM885.0 2414.9h1.0V2526.4h-1.0zM584.0 2693.7h6.0V3219h-6.0zM590.0 2679.0h6.0V3219h-6.0zM596.0 2695.4h6.0V3219h-6.0zM602.0 2700.3h6.0V3219h-6.0zM608.0 2712.0h6.0V3219h-6.0zM614.0 2732.5h6.0V3219h-6.0zM620.0 2748.5h6.0V3219h-6.0zM626.0 2773.0h6.0V3219h-6.0zM632.0 2780.4h6.0V3219h-6.0zM638.0 2803.7h6.0V3219h-6.0zM644.0 2818.1h6.0V3219h-6.0zM650.0 2858.6h6.0V3219h-6.0zM656.0 2854.0h6.0V3219h-6.0zM662.0 2863.1h6.0V3219h-6.0zM668.0 2851.5h6.0V3219h-6.0zM674.0 2667.0h6.0V3219h-6.0zM680.0 2686.5h6.0V3219h-6.0zM686.0 2698.6h6.0V3219h-6.0zM692.0 2677.5h6.0V3219h-6.0zM698.0 2679.7h6.0V3219h-6.0zM704.0 2712.9h6.0V3219h-6.0zM710.0 2694.7h6.0V3219h-6.0zM716.0 2694.4h6.0V3219h-6.0zM722.0 2736.5h6.0V3219h-6.0zM728.0 2747.8h6.0V3219h-6.0zM734.0 2762.2h6.0V3219h-6.0zM740.0 2771.9h6.0V3219h-6.0zM746.0 2770.5h6.0V3219h-6.0zM752.0 2771.8h6.0V3219h-6.0zM758.0 2777.7h6.0V3219h-6.0zM764.0 2779.2h6.0V3219h-6.0zM770.0 2776.9h6.0V3219h-6.0zM776.0 2777.5h6.0V3219h-6.0zM782.0 2758.8h6.0V3219h-6.0zM788.0 2764.8h6.0V3219h-6.0zM794.0 2775.3h6.0V3219h-6.0zM800.0 2795.9h6.0V3219h-6.0zM806.0 2782.6h6.0V3219h-6.0zM812.0 2789.1h6.0V3219h-6.0zM818.0 2841.3h6.0V3219h-6.0zM824.0 2876.9h6.0V3219h-6.0zM830.0 2907.1h6.0V3219h-6.0zM836.0 2807.3h6.0V3219h-6.0zM842.0 2803.4h6.0V3219h-6.0zM848.0 2799.4h6.0V3219h-6.0zM854.0 2798.6h6.0V3219h-6.0zM860.0 2803.5h6.0V3219h-6.0zM866.0 2773.5h6.0V3219h-6.0zM872.0 2814.0h6.0V3219h-6.0zM878.0 2799.2h6.0V3219h-6.0zM884.0 2814.2h2.0V3219h-2.0zM653 2494h11v11h-11zM661 2655h11v11h-11zM624 2532h11v11h-11zM661 2651h11v11h-11zM641 2638h11v11h-11zM630 2525h11v11h-11zM617 2577h11v11h-11zM661 2650h11v11h-11zM641 2624h11v11h-11zM661 2599h11v11h-11zM611 2669h11v11h-11zM615 2669h11v11h-11zM605 2669h11v11h-11zM661 2545h11v11h-11zM614 2669h11v11h-11zM616 2618h11v11h-11zM656 2556h11v11h-11zM595 2571h11v11h-11zM647 2577h11v11h-11zM634 2602h11v11h-11zM654 2524h11v11h-11zM610 2557h11v11h-11zM642 2651h11v11h-11zM635 2617h11v11h-11zM613 2669h11v11h-11zM609 2506h11v11h-11zM640 2610h11v11h-11zM646 2518h11v11h-11zM648 2648h11v11h-11zM605 2564h11v11h-11zM621 2639h11v11h-11zM596 2523h11v11h-11zM609 2540h11v11h-11zM599 2521h11v11h-11zM601 2606h11v11h-11zM586 2548h11v11h-11zM584 2664h11v11h-11zM661 2563h11v11h-11zM598 2634h11v11h-11zM632 2552h11v11h-11zM617 2576h11v11h-11zM661 2622h11v11h-11zM634 2488h11v11h-11zM652 2510h11v11h-11zM661 2571h11v11h-11zM616 2574h11v11h-11zM640 2565h11v11h-11zM649 2669h11v11h-11zM645 2524h11v11h-11zM595 2645h11v11h-11zM661 2638h11v11h-11zM600 2591h11v11h-11zM584 2578h11v11h-11zM661 2510h11v11h-11zM659 2662h11v11h-11zM640 2633h11v11h-11zM659 2594h11v11h-11zM631 2647h11v11h-11zM611 2650h11v11h-11zM587 2615h11v11h-11zM646 2562h11v11h-11zM658 2619h11v11h-11zM584 2669h11v11h-11zM659 2564h11v11h-11zM661 2669h11v11h-11zM591 2669h11v11h-11zM596 2586h11v11h-11zM647 2568h11v11h-11zM650 2622h11v11h-11zM605 2655h11v11h-11zM626 2504h11v11h-11zM632 2612h11v11h-11zM661 2669h11v11h-11zM661 2556h11v11h-11zM646 2619h11v11h-11zM634 2661h11v11h-11zM616 2669h11v11h-11zM661 2579h11v11h-11zM661 2629h11v11h-11zM609 2669h11v11h-11zM596 2579h11v11h-11zM633 2607h11v11h-11zM626 2524h11v11h-11zM627 2516h11v11h-11zM615 2576h11v11h-11zM629 2564h11v11h-11zM622 2614h11v11h-11zM608 2567h11v11h-11zM593 2603h11v11h-11zM628 2569h11v11h-11zM587 2607h11v11h-11zM629 2555h11v11h-11zM591 2614h11v11h-11zM591 2614h11v11h-11zM606 2563h11v11h-11zM629 2609h11v11h-11zM620 2563h11v11h-11zM594 2614h11v11h-11zM629 2596h11v11h-11zM629 2562h11v11h-11zM629 2577h11v11h-11zM586 2614h11v11h-11zM623 2591h11v11h-11zM595 2610h11v11h-11zM629 2584h11v11h-11zM628 2610h11v11h-11zM607 2555h11v11h-11zM600 2569h11v11h-11zM589 2586h11v11h-11zM722 2696h11v11h-11zM717 2571h11v11h-11zM712 2504h11v11h-11zM711 2761h11v11h-11zM675 2603h11v11h-11zM676 2585h11v11h-11zM734 2658h11v11h-11zM706 2600h11v11h-11zM700 2715h11v11h-11zM709 2719h11v11h-11zM707 2602h11v11h-11zM701 2769h11v11h-11zM722 2739h11v11h-11zM705 2599h11v11h-11zM691 2669h11v11h-11zM709 2652h11v11h-11zM688 2514h11v11h-11zM691 2639h11v11h-11zM725 2752h11v11h-11zM734 2688h11v11h-11zM700 2559h11v11h-11zM721 2573h11v11h-11zM708 2539h11v11h-11zM686 2521h11v11h-11zM717 2740h11v11h-11zM726 2675h11v11h-11zM723 2672h11v11h-11zM672 2549h11v11h-11zM718 2727h11v11h-11zM734 2552h11v11h-11zM718 2758h11v11h-11zM734 2547h11v11h-11zM721 2767h11v11h-11zM689 2671h11v11h-11zM702 2650h11v11h-11zM724 2747h11v11h-11zM717 2635h11v11h-11zM702 2650h11v11h-11zM696 2605h11v11h-11zM712 2769h11v11h-11zM681 2753h11v11h-11zM692 2595h11v11h-11zM694 2697h11v11h-11zM677 2493h11v11h-11zM698 2669h11v11h-11zM686 2622h11v11h-11zM734 2591h11v11h-11zM717 2664h11v11h-11zM702 2606h11v11h-11zM730 2644h11v11h-11zM675 2523h11v11h-11zM716 2703h11v11h-11zM719 2539h11v11h-11zM689 2483h11v11h-11zM727 2596h11v11h-11zM728 2506h11v11h-11zM734 2688h11v11h-11zM691 2514h11v11h-11zM706 2663h11v11h-11zM718 2685h11v11h-11zM708 2650h11v11h-11zM718 2729h11v11h-11zM726 2659h11v11h-11zM704 2641h11v11h-11zM732 2746h11v11h-11zM699 2657h11v11h-11zM734 2487h11v11h-11zM684 2713h11v11h-11zM690 2672h11v11h-11zM734 2503h11v11h-11zM734 2729h11v11h-11zM685 2621h11v11h-11zM692 2531h11v11h-11zM711 2508h11v11h-11zM715 2586h11v11h-11zM734 2563h11v11h-11zM693 2672h11v11h-11zM734 2497h11v11h-11zM681 2496h11v11h-11zM672 2638h11v11h-11zM734 2538h11v11h-11zM722 2673h11v11h-11zM693 2599h11v11h-11zM728 2769h11v11h-11zM704 2658h11v11h-11zM704 2731h11v11h-11zM714 2672h11v11h-11zM734 2611h11v11h-11zM708 2613h11v11h-11zM691 2666h11v11h-11zM734 2567h11v11h-11zM681 2684h11v11h-11zM734 2604h11v11h-11zM713 2653h11v11h-11zM703 2737h11v11h-11zM734 2679h11v11h-11zM704 2731h11v11h-11zM685 2491h11v11h-11zM720 2720h11v11h-11zM717 2769h11v11h-11zM727 2706h11v11h-11zM691 2556h11v11h-11zM708 2574h11v11h-11zM734 2483h11v11h-11zM687 2599h11v11h-11zM734 2528h11v11h-11zM707 2567h11v11h-11zM697 2657h11v11h-11zM734 2621h11v11h-11zM731 2725h11v11h-11zM672 2506h11v11h-11zM733 2757h11v11h-11zM734 2581h11v11h-11zM734 2696h11v11h-11zM674 2535h11v11h-11zM714 2752h11v11h-11zM693 2499h11v11h-11zM731 2504h11v11h-11zM734 2682h11v11h-11zM734 2607h11v11h-11zM734 2649h11v11h-11zM733 2633h11v11h-11zM688 2702h11v11h-11zM726 2613h11v11h-11zM695 2595h11v11h-11zM713 2663h11v11h-11zM705 2659h11v11h-11zM734 2733h11v11h-11zM726 2576h11v11h-11zM734 2602h11v11h-11zM681 2769h11v11h-11zM730 2550h11v11h-11zM682 2517h11v11h-11zM708 2689h11v11h-11zM724 2557h11v11h-11zM705 2642h11v11h-11zM686 2566h11v11h-11zM677 2648h11v11h-11zM708 2555h11v11h-11zM734 2712h11v11h-11zM733 2619h11v11h-11zM708 2769h11v11h-11zM688 2569h11v11h-11zM695 2553h11v11h-11zM734 2504h11v11h-11zM687 2670h11v11h-11zM725 2542h11v11h-11zM703 2488h11v11h-11zM734 2662h11v11h-11zM687 2545h11v11h-11zM685 2655h11v11h-11zM728 2728h11v11h-11zM768 2725h11v11h-11zM770 2607h11v11h-11zM764 2540h11v11h-11zM789 2739h11v11h-11zM749 2682h11v11h-11zM747 2623h11v11h-11zM770 2536h11v11h-11zM765 2686h11v11h-11zM774 2593h11v11h-11zM745 2742h11v11h-11zM769 2742h11v11h-11zM777 2656h11v11h-11zM767 2759h11v11h-11zM761 2537h11v11h-11zM789 2526h11v11h-11zM771 2610h11v11h-11zM762 2709h11v11h-11zM789 2758h11v11h-11zM745 2738h11v11h-11zM749 2636h11v11h-11zM745 2759h11v11h-11zM749 2759h11v11h-11zM745 2759h11v11h-11zM788 2747h11v11h-11zM789 2638h11v11h-11zM769 2559h11v11h-11zM789 2686h11v11h-11zM767 2720h11v11h-11zM788 2544h11v11h-11zM776 2537h11v11h-11zM766 2608h11v11h-11zM756 2759h11v11h-11zM748 2759h11v11h-11zM760 2759h11v11h-11zM808.0 2600.0H830.0V2758.0H808.0zM875 2622h11v11h-11zM875 2779h11v11h-11zM848 2581h11v11h-11zM870 2592h11v11h-11zM871 2558h11v11h-11zM849 2779h11v11h-11zM869 2659h11v11h-11zM858 2615h11v11h-11zM852 2632h11v11h-11zM864 2779h11v11h-11zM875 2593h11v11h-11zM866 2774h11v11h-11zM875 2573h11v11h-11zM867 2668h11v11h-11zM857 2688h11v11h-11zM872 2687h11v11h-11zM864 2679h11v11h-11zM843 2586h11v11h-11zM865 2697h11v11h-11zM871 2639h11v11h-11zM857 2562h11v11h-11zM875 2614h11v11h-11zM855 2619h11v11h-11zM875 2701h11v11h-11zM875 2779h11v11h-11zM857 2689h11v11h-11zM875 2685h11v11h-11zM861 2779h11v11h-11zM643 2839h11v11h-11zM661 2839h11v11h-11zM661 2813h11v11h-11zM657 2699h11v11h-11zM634 2735h11v11h-11zM661 2839h11v11h-11zM655 2749h11v11h-11zM651 2754h11v11h-11zM651 2762h11v11h-11zM635 2792h11v11h-11zM630 2794h11v11h-11zM659 2757h11v11h-11zM634 2781h11v11h-11zM635 2789h11v11h-11zM640 2828h11v11h-11zM661 2818h11v11h-11zM630 2827h11v11h-11zM659 2742h11v11h-11zM641 2839h11v11h-11zM651 2706h11v11h-11zM645 2707h11v11h-11zM661 2804h11v11h-11zM661 2697h11v11h-11zM639 2714h11v11h-11zM661 2836h11v11h-11zM643 2786h11v11h-11zM902.0 2752.1h6.0V3219h-6.0zM908.0 2700.0h6.0V3219h-6.0zM914.0 2683.4h6.0V3219h-6.0zM920.0 2650.1h6.0V3219h-6.0zM926.0 2643.5h6.0V3219h-6.0zM932.0 2652.9h6.0V3219h-6.0zM938.0 2667.7h6.0V3219h-6.0zM944.0 2691.1h6.0V3219h-6.0zM950.0 2728.3h6.0V3219h-6.0zM956.0 2758.6h6.0V3219h-6.0zM962.0 2754.8h6.0V3219h-6.0zM968.0 2736.6h6.0V3219h-6.0zM974.0 2752.0h6.0V3219h-6.0zM980.0 2719.7h6.0V3219h-6.0zM986.0 2704.5h6.0V3219h-6.0zM992.0 2697.5h6.0V3219h-6.0zM998.0 2676.5h6.0V3219h-6.0zM1004.0 2757.2h6.0V3219h-6.0zM1010.0 2748.1h6.0V3219h-6.0zM1016.0 2712.5h6.0V3219h-6.0zM1022.0 2797.8h6.0V3219h-6.0zM1028.0 2793.4h6.0V3219h-6.0zM1034.0 2768.3h6.0V3219h-6.0zM1040.0 2758.6h6.0V3219h-6.0zM1046.0 2753.5h6.0V3219h-6.0zM1052.0 2764.8h6.0V3219h-6.0zM1058.0 2823.1h6.0V3219h-6.0zM1064.0 2892.4h6.0V3219h-6.0zM1070.0 2858.9h6.0V3219h-6.0zM1076.0 2840.9h6.0V3219h-6.0zM1082.0 2854.2h6.0V3219h-6.0zM1088.0 2832.9h6.0V3219h-6.0zM1094.0 2834.3h6.0V3219h-6.0zM1100.0 2822.6h6.0V3219h-6.0zM1106.0 2791.5h6.0V3219h-6.0zM1112.0 2783.0h6.0V3219h-6.0zM1118.0 2788.7h6.0V3219h-6.0zM1124.0 2747.5h6.0V3219h-6.0zM1130.0 2789.1h6.0V3219h-6.0zM1136.0 2788.9h6.0V3219h-6.0zM1142.0 2786.0h6.0V3219h-6.0zM1148.0 2762.8h6.0V3219h-6.0zM1154.0 2717.6h6.0V3219h-6.0zM1160.0 2673.5h6.0V3219h-6.0zM1166.0 2680.5h6.0V3219h-6.0zM1172.0 2698.9h6.0V3219h-6.0zM1178.0 2717.7h6.0V3219h-6.0zM1184.0 2726.2h6.0V3219h-6.0zM1190.0 2721.4h6.0V3219h-6.0zM1196.0 2704.1h6.0V3219h-6.0zM1202.0 2706.7h6.0V3219h-6.0zM1208.0 2664.4h6.0V3219h-6.0zM1214.0 2668.3h6.0V3219h-6.0zM1220.0 2651.2h6.0V3219h-6.0zM1226.0 2650.2h6.0V3219h-6.0zM1232.0 2763.7h6.0V3219h-6.0zM1238.0 2866.6h6.0V3219h-6.0zM1244.0 2841.9h6.0V3219h-6.0zM1250.0 2818.1h6.0V3219h-6.0zM1256.0 2824.6h6.0V3219h-6.0zM1262.0 2798.3h6.0V3219h-6.0zM1268.0 2814.0h6.0V3219h-6.0zM1274.0 2799.9h6.0V3219h-6.0zM1280.0 2819.1h6.0V3219h-6.0zM1286.0 2871.2h6.0V3219h-6.0zM1292.0 2913.2h6.0V3219h-6.0zM1298.0 2929.9h6.0V3219h-6.0zM1304.0 2884.0h6.0V3219h-6.0zM1310.0 2837.5h6.0V3219h-6.0zM1316.0 2816.4h6.0V3219h-6.0zM1322.0 2888.5h6.0V3219h-6.0zM1328.0 2904.5h6.0V3219h-6.0zM1334.0 2928.9h6.0V3219h-6.0zM1340.0 2938.7h6.0V3219h-6.0zM1346.0 2944.3h6.0V3219h-6.0zM1352.0 2945.3h6.0V3219h-6.0zM1358.0 2939.8h6.0V3219h-6.0zM1364.0 2905.2h6.0V3219h-6.0zM1370.0 2804.9h6.0V3219h-6.0zM1376.0 2766.6h6.0V3219h-6.0zM1382.0 2792.5h6.0V3219h-6.0zM1388.0 2849.4h6.0V3219h-6.0zM1394.0 2829.7h6.0V3219h-6.0zM1400.0 2799.9h6.0V3219h-6.0zM1406.0 2780.4h6.0V3219h-6.0zM1412.0 2779.1h6.0V3219h-6.0zM1418.0 2743.7h6.0V3219h-6.0zM1424.0 2745.3h6.0V3219h-6.0zM1430.0 2744.7h6.0V3219h-6.0zM1436.0 2750.0h6.0V3219h-6.0zM1442.0 2769.8h6.0V3219h-6.0zM1448.0 2768.9h6.0V3219h-6.0zM1454.0 2785.9h6.0V3219h-6.0zM1460.0 2813.5h6.0V3219h-6.0zM1466.0 2844.0h6.0V3219h-6.0zM1472.0 2852.9h6.0V3219h-6.0zM1478.0 2876.4h6.0V3219h-6.0zM1484.0 2868.6h6.0V3219h-6.0zM1490.0 2846.9h6.0V3219h-6.0zM1496.0 2861.2h6.0V3219h-6.0zM1502.0 2875.1h6.0V3219h-6.0zM1508.0 2874.6h6.0V3219h-6.0zM1514.0 2890.6h6.0V3219h-6.0zM1520.0 2922.0h6.0V3219h-6.0zM1526.0 2923.3h6.0V3219h-6.0zM1532.0 2922.7h6.0V3219h-6.0zM1538.0 2901.7h6.0V3219h-6.0zM1544.0 2925.5h6.0V3219h-6.0zM1550.0 2885.7h6.0V3219h-6.0zM1556.0 2876.2h6.0V3219h-6.0zM1562.0 2846.9h6.0V3219h-6.0zM1568.0 2845.2h6.0V3219h-6.0zM1574.0 2840.7h6.0V3219h-6.0zM1580.0 2814.4h6.0V3219h-6.0zM1586.0 2822.2h6.0V3219h-6.0zM1592.0 2808.7h6.0V3219h-6.0zM1598.0 2792.6h6.0V3219h-6.0zM1604.0 2759.4h6.0V3219h-6.0zM1610.0 2740.8h6.0V3219h-6.0zM1616.0 2736.1h6.0V3219h-6.0zM1622.0 2737.3h6.0V3219h-6.0zM1628.0 2637.5h6.0V3219h-6.0zM1634.0 2619.4h6.0V3219h-6.0zM1640.0 2583.3h6.0V3219h-6.0zM1646.0 2604.7h6.0V3219h-6.0zM1652.0 2739.7h6.0V3219h-6.0zM1658.0 2829.2h6.0V3219h-6.0zM1664.0 2823.6h6.0V3219h-6.0zM1670.0 2814.7h6.0V3219h-6.0zM1676.0 2786.2h6.0V3219h-6.0zM1682.0 2774.1h6.0V3219h-6.0zM1688.0 2743.7h6.0V3219h-6.0zM1694.0 2766.3h2.0V3219h-2.0zM1696.0 2971.9h5.0V3219h-5.0zM1701.0 2970.1h5.0V3219h-5.0zM1706.0 2774.0h6.0V3219h-6.0zM1712.0 2773.3h6.0V3219h-6.0zM1718.0 2771.6h6.0V3219h-6.0zM1724.0 2761.6h6.0V3219h-6.0zM1730.0 2756.6h6.0V3219h-6.0zM1736.0 2798.8h6.0V3219h-6.0zM1742.0 2919.5h6.0V3219h-6.0zM1748.0 2968.1h6.0V3219h-6.0zM1754.0 2960.9h6.0V3219h-6.0z"/>
<mask id="scm2" maskUnits="userSpaceOnUse" x="240" y="2330" width="1590" height="930"><rect x="240" y="2330" width="1590" height="930" fill="#fff"/><path fill="#000" d="M1355.4 2477.5h7.9v10.6h-7.9zM1622.4 2459.0h5.4v8.3h-5.4zM1231.0 2420.2h7.9v8.9h-7.9zM1671.1 2483.6h8.8v12.0h-8.8zM1152.6 2489.0h4.3v7.3h-4.3zM1290.2 2444.8h7.1v13.6h-7.1zM1141.0 2475.7h5.1v7.2h-5.1zM1656.6 2454.8h6.1v8.9h-6.1zM1182.3 2423.2h8.1v10.3h-8.1zM1153.1 2495.1h7.0v13.0h-7.0zM1591.4 2498.9h5.2v11.5h-5.2zM1666.4 2523.2h5.2v7.2h-5.2zM1153.6 2460.4h8.6v10.3h-8.6zM1289.3 2424.8h8.6v6.5h-8.6zM1170.8 2459.6h8.4v8.8h-8.4zM1470.0 2492.7h5.0v9.5h-5.0zM1156.5 2468.4h4.5v10.3h-4.5zM1583.1 2447.3h8.0v8.1h-8.0zM1127.0 2479.6h6.0v12.3h-6.0zM1654.2 2495.2h6.7v11.7h-6.7zM1394.7 2451.6h5.1v7.6h-5.1zM1512.4 2467.2h6.8v6.7h-6.8zM1649.4 2516.0h4.2v7.0h-4.2zM1672.9 2438.9h8.4v9.1h-8.4zM1241.3 2420.4h7.6v13.5h-7.6zM1575.3 2488.7h4.6v6.7h-4.6zM1483.9 2435.5h6.4v6.9h-6.4zM1485.6 2507.5h4.7v10.8h-4.7zM1294.3 2436.2h8.1v7.1h-8.1zM1609.6 2497.6h6.5v6.2h-6.5zM1633.0 2511.9h8.0v9.9h-8.0zM1245.3 2457.1h8.1v12.4h-8.1zM1390.5 2526.4h4.3v12.1h-4.3zM1609.8 2527.1h5.4v9.4h-5.4zM1639.7 2449.0h7.8v13.1h-7.8zM1502.5 2528.1h7.1v6.5h-7.1zM1442.9 2427.4h6.5v7.2h-6.5zM1358.2 2512.7h6.3v6.6h-6.3zM1379.9 2467.3h7.7v12.8h-7.7zM1444.5 2463.9h4.3v12.3h-4.3zM1160.2 2433.2h4.7v9.7h-4.7zM1201.9 2511.5h4.4v9.4h-4.4zM1433.8 2437.1h7.0v12.9h-7.0zM1452.3 2489.3h5.4v12.7h-5.4zM1236.4 2469.0h7.2v6.4h-7.2zM1454.1 2447.6h8.2v13.5h-8.2zM1354.4 2521.9h4.2v10.5h-4.2zM1133.9 2423.2h5.0v7.6h-5.0zM1210.6 2421.6h8.0v13.0h-8.0zM1468.0 2522.1h6.9v8.0h-6.9zM1463.1 2452.4h7.7v8.2h-7.7zM1609.4 2495.9h7.8v8.1h-7.8zM1656.0 2484.8h8.5v8.8h-8.5zM1298.8 2432.3h5.3v11.2h-5.3zM1260.7 2430.9h4.2v10.9h-4.2zM1545.5 2450.8h7.9v7.1h-7.9zM1588.4 2508.9h5.8v13.5h-5.8zM1645.1 2488.0h8.9v10.8h-8.9zM1336.7 2483.5h6.9v8.6h-6.9zM1608.6 2498.4h5.2v11.1h-5.2zM1330.4 2469.4h5.1v6.2h-5.1zM1413.4 2486.4h8.2v10.4h-8.2zM1436.3 2480.0h6.8v11.4h-6.8zM1371.1 2520.2h5.2v7.0h-5.2zM1444.7 2477.9h8.7v8.3h-8.7zM1565.9 2429.6h6.3v7.4h-6.3zM1238.7 2441.6h5.1v8.2h-5.1zM1221.4 2490.6h4.4v10.2h-4.4zM1393.1 2486.8h7.0v11.0h-7.0zM1510.3 2443.7h5.5v9.7h-5.5zM1668.2 2487.4h7.7v10.7h-7.7zM1286.0 2460.2h6.7v12.1h-6.7zM1526.9 2440.0h6.2v11.9h-6.2zM1400.6 2525.7h8.8v13.9h-8.8zM1173.5 2421.9h7.1v9.1h-7.1zM1468.7 2504.7h7.0v11.7h-7.0zM1462.5 2488.5h6.2v11.9h-6.2zM1437.6 2429.8h6.7v11.3h-6.7zM1363.6 2525.1h7.4v11.6h-7.4zM1410.6 2460.3h6.4v7.3h-6.4zM1224.3 2496.1h4.8v13.1h-4.8zM1683.3 2429.8h4.9v10.1h-4.9zM1669.2 2523.5h8.3v6.0h-8.3zM1382.0 2437.8h6.2v11.1h-6.2zM1611.4 2432.6h5.8v9.5h-5.8zM1433.6 2507.3h6.7v9.8h-6.7zM1657.7 2486.7h7.0v8.6h-7.0zM1610.4 2425.1h5.4v10.4h-5.4zM1285.6 2437.6h7.2v9.9h-7.2zM1361.2 2486.5h5.2v9.5h-5.2zM1389.9 2506.8h5.4v11.0h-5.4zM1669.1 2481.3h8.0v7.9h-8.0zM1523.7 2468.9h5.7v8.0h-5.7zM1604.7 2449.6h7.4v8.0h-7.4zM1348.2 2483.8h8.4v9.5h-8.4zM1438.0 2524.1h6.6v10.4h-6.6zM1675.5 2421.8h7.7v6.7h-7.7zM1279.5 2423.2h4.3v12.5h-4.3zM1597.6 2422.2h4.9v10.0h-4.9zM1155.0 2455.9h4.8v6.1h-4.8zM1487.0 2510.8h6.5v13.7h-6.5zM1500.7 2445.6h7.0v13.3h-7.0zM1186.4 2521.8h5.9v9.8h-5.9zM1399.6 2510.5h6.4v7.6h-6.4zM1176.2 2446.4h5.4v10.7h-5.4zM1510.1 2445.0h4.9v10.0h-4.9zM1543.6 2528.8h7.4v10.7h-7.4zM1379.6 2474.0h5.7v14.0h-5.7zM1486.5 2431.7h4.9v6.7h-4.9zM1429.2 2442.2h4.2v6.7h-4.2zM1374.8 2435.9h5.3v12.1h-5.3zM1471.9 2467.2h7.4v14.0h-7.4zM1593.0 2505.1h6.7v11.6h-6.7zM1183.0 2433.8h5.2v12.2h-5.2zM1438.5 2452.0h6.5v7.5h-6.5zM1578.7 2524.4h8.7v9.5h-8.7zM1400.0 2463.1h6.3v12.1h-6.3zM1641.5 2494.8h4.6v11.3h-4.6zM1324.4 2463.0h5.6v10.2h-5.6zM1393.3 2478.3h7.9v6.1h-7.9zM1267.1 2463.6h4.7v11.9h-4.7zM1366.1 2494.7h5.2v10.8h-5.2zM1433.0 2431.3h6.1v12.3h-6.1zM1291.4 2526.2h6.5v8.0h-6.5zM1212.1 2488.1h6.4v11.9h-6.4zM1196.4 2422.8h4.6v7.8h-4.6zM1329.7 2421.3h8.5v13.7h-8.5zM1150.4 2503.3h7.7v11.3h-7.7zM1561.6 2506.0h4.3v7.9h-4.3zM1573.1 2486.4h5.2v10.1h-5.2zM1163.0 2441.1h6.6v7.5h-6.6zM1382.0 2489.5h6.6v10.8h-6.6zM1354.4 2511.6h6.8v11.2h-6.8zM1675.5 2508.5h6.7v13.0h-6.7zM1432.7 2446.9h7.9v11.5h-7.9zM1264.1 2486.6h4.5v11.3h-4.5zM1364.6 2446.1h6.7v10.9h-6.7zM1620.6 2454.6h5.5v11.6h-5.5zM1365.1 2489.8h5.6v9.6h-5.6zM1575.8 2498.2h7.8v12.1h-7.8zM1373.4 2491.9h8.9v9.6h-8.9zM1358.7 2479.8h5.6v12.6h-5.6zM1130.9 2450.9h6.6v8.9h-6.6zM1201.6 2516.1h6.4v13.6h-6.4zM1280.4 2422.1h8.9v12.3h-8.9zM1291.0 2526.5h8.4v6.5h-8.4zM1589.9 2439.1h7.4v12.6h-7.4zM1336.6 2476.1h6.5v6.8h-6.5zM1496.1 2435.7h8.1v8.3h-8.1zM1450.1 2486.6h5.3v6.5h-5.3zM1647.2 2499.9h7.6v9.4h-7.6zM1225.3 2451.3h6.8v13.0h-6.8zM1658.3 2494.2h6.8v10.8h-6.8zM1387.1 2441.9h4.2v13.6h-4.2zM1601.2 2480.1h7.8v11.0h-7.8zM1385.9 2458.8h5.3v9.8h-5.3zM1266.2 2433.4h6.9v7.2h-6.9zM1538.7 2464.2h4.1v10.2h-4.1zM1244.0 2337.0H1255.4V2471.3H1244.0zM1290.0 2337.0H1300.0V2458.4H1290.0zM1330.0 2337.0H1341.4V2460.9H1330.0zM1437.0 2337.0H1448.1V2456.8H1437.0zM1490.0 2337.0H1501.7V2474.3H1490.0zM1543.0 2337.0H1550.1V2476.3H1543.0zM1600.0 2337.0H1606.9V2462.4H1600.0zM1216.5 2586.8h13.5v24.0h-13.5zM1172.6 2555.8h11.9v18.2h-11.9zM1190.6 2544.0h11.1v15.5h-11.1zM1200.2 2587.9h8.4v9.9h-8.4zM1178.2 2565.8h8.3v21.3h-8.3zM1136.4 2543.7h9.1v8.0h-9.1zM1177.4 2621.9h13.7v22.9h-13.7zM1140.3 2579.4h10.3v19.6h-10.3zM1188.5 2572.6h10.9v15.0h-10.9zM1174.0 2582.1h11.2v11.5h-11.2zM1152.5 2612.3h10.2v8.9h-10.2zM1222.2 2597.3h7.3v16.1h-7.3z"/></mask>
<path fill="#03972f" mask="url(#scm2)" d="M1014 3136h11v11h-11zM1014 3101h11v11h-11zM1014 3183h11v11h-11zM1014 3075h11v11h-11zM1007 3102h11v11h-11zM1000 3094h11v11h-11zM1010 3130h11v11h-11zM1000 3098h11v11h-11zM1014 3146h11v11h-11zM1014 3080h11v11h-11zM1160 3130h11v11h-11zM1169 3142h11v11h-11zM1169 3060h11v11h-11zM1160 3112h11v11h-11zM1167 3105h11v11h-11zM1169 3132h11v11h-11zM1169 3132h11v11h-11zM1169 3141h11v11h-11zM1166 3148h11v11h-11zM1298 3128h11v11h-11zM1299 3189h11v11h-11zM1285 3124h11v11h-11zM1299 3047h11v11h-11zM1294 3133h11v11h-11zM1299 3175h11v11h-11zM1285 3133h11v11h-11zM1299 3160h11v11h-11zM1299 3150h11v11h-11zM1642 3114h11v11h-11zM1642 3108h11v11h-11zM1642 3049h11v11h-11zM1642 3166h11v11h-11zM1642 3042h11v11h-11zM1642 3131h11v11h-11zM1642 3130h11v11h-11zM1667 3101h11v11h-11zM1667 3133h11v11h-11zM1667 3116h11v11h-11zM1667 3161h11v11h-11zM1667 3189h11v11h-11zM1667 3140h11v11h-11zM1667 3129h11v11h-11zM1662 3189h11v11h-11zM1662 3084h11v11h-11zM1667 3189h11v11h-11zM1431 3095h11v11h-11zM1427 3188h11v11h-11zM1439 3027h11v11h-11zM1426 3032h11v11h-11zM1431 3019h11v11h-11zM1437 3067h11v11h-11zM1431 3132h11v11h-11zM1120.0 2430.7h7.0V2553.2h-7.0zM1127.0 2421.7h7.0V2549.7h-7.0zM1134.0 2406.1h7.0V2526.8h-7.0zM1141.0 2398.1h7.0V2529.8h-7.0zM1148.0 2404.6h7.0V2541.4h-7.0zM1155.0 2386.0h7.0V2563.8h-7.0zM1162.0 2397.3h7.0V2546.6h-7.0zM1169.0 2399.2h7.0V2539.2h-7.0zM1176.0 2385.0h7.0V2551.8h-7.0zM1183.0 2383.7h7.0V2530.8h-7.0zM1190.0 2373.1h7.0V2529.4h-7.0zM1197.0 2376.5h7.0V2582.0h-7.0zM1204.0 2382.4h7.0V2527.4h-7.0zM1211.0 2384.8h7.0V2552.4h-7.0zM1218.0 2414.0h7.0V2546.5h-7.0zM1225.0 2430.8h7.0V2537.5h-7.0zM1232.0 2448.9h7.0V2558.9h-7.0zM1239.0 2442.5h7.0V2526.5h-7.0zM1246.0 2433.0h7.0V2535.0h-7.0zM1253.0 2413.4h7.0V2525.7h-7.0zM1260.0 2421.0h7.0V2537.4h-7.0zM1267.0 2431.5h7.0V2536.3h-7.0zM1274.0 2450.8h7.0V2540.1h-7.0zM1281.0 2459.0h7.0V2529.8h-7.0zM1288.0 2452.4h7.0V2571.3h-7.0zM1295.0 2449.2h7.0V2564.2h-7.0zM1302.0 2441.3h7.0V2519.0h-7.0zM1309.0 2433.5h7.0V2527.9h-7.0zM1316.0 2433.7h7.0V2546.2h-7.0zM1323.0 2446.9h7.0V2552.8h-7.0zM1330.0 2429.2h7.0V2552.8h-7.0zM1337.0 2429.7h7.0V2563.0h-7.0zM1344.0 2454.3h7.0V2516.4h-7.0zM1351.0 2437.1h7.0V2525.3h-7.0zM1358.0 2423.6h7.0V2538.4h-7.0zM1365.0 2380.1h7.0V2530.8h-7.0zM1372.0 2392.7h7.0V2534.1h-7.0zM1379.0 2388.3h7.0V2553.1h-7.0zM1386.0 2386.2h7.0V2537.4h-7.0zM1393.0 2381.8h7.0V2539.3h-7.0zM1400.0 2384.5h7.0V2533.4h-7.0zM1407.0 2379.2h7.0V2530.3h-7.0zM1414.0 2371.2h7.0V2556.3h-7.0zM1421.0 2405.8h7.0V2534.9h-7.0zM1428.0 2415.4h7.0V2513.3h-7.0zM1435.0 2450.5h7.0V2544.2h-7.0zM1442.0 2434.4h7.0V2536.0h-7.0zM1449.0 2410.5h7.0V2525.4h-7.0zM1456.0 2392.2h7.0V2526.3h-7.0zM1463.0 2399.5h7.0V2525.1h-7.0zM1470.0 2398.0h7.0V2529.5h-7.0zM1477.0 2417.3h7.0V2531.6h-7.0zM1484.0 2414.4h7.0V2523.0h-7.0zM1491.0 2428.2h7.0V2545.4h-7.0zM1498.0 2429.2h7.0V2531.5h-7.0zM1505.0 2445.7h7.0V2532.9h-7.0zM1512.0 2450.4h7.0V2506.4h-7.0zM1519.0 2438.4h7.0V2528.1h-7.0zM1526.0 2422.6h7.0V2542.5h-7.0zM1533.0 2426.4h7.0V2548.1h-7.0zM1540.0 2421.0h7.0V2557.8h-7.0zM1547.0 2416.0h7.0V2538.5h-7.0zM1554.0 2406.3h7.0V2567.0h-7.0zM1561.0 2411.4h7.0V2538.0h-7.0zM1568.0 2408.2h7.0V2554.3h-7.0zM1575.0 2418.0h7.0V2543.1h-7.0zM1582.0 2409.2h7.0V2531.8h-7.0zM1589.0 2409.5h7.0V2552.0h-7.0zM1596.0 2413.8h7.0V2565.6h-7.0zM1603.0 2412.9h7.0V2560.6h-7.0zM1610.0 2400.0h7.0V2552.4h-7.0zM1617.0 2395.0h7.0V2551.2h-7.0zM1624.0 2402.2h7.0V2540.9h-7.0zM1631.0 2376.6h7.0V2558.0h-7.0zM1638.0 2388.4h7.0V2570.7h-7.0zM1645.0 2392.1h7.0V2595.5h-7.0zM1652.0 2380.2h7.0V2542.6h-7.0zM1659.0 2395.9h7.0V2526.7h-7.0zM1666.0 2421.0h7.0V2554.5h-7.0zM1673.0 2425.7h7.0V2522.9h-7.0zM1680.0 2442.5h2.0V2507.6h-2.0zM1131.0 2528.1h6.0V2659.1h-6.0zM1137.0 2523.5h6.0V2640.0h-6.0zM1143.0 2528.8h6.0V2659.9h-6.0zM1149.0 2535.5h6.0V2664.6h-6.0zM1155.0 2519.7h6.0V2648.5h-6.0zM1161.0 2522.1h6.0V2638.0h-6.0zM1167.0 2529.8h6.0V2680.9h-6.0zM1173.0 2525.8h6.0V2638.9h-6.0zM1179.0 2518.2h6.0V2651.3h-6.0zM1185.0 2525.9h6.0V2637.1h-6.0zM1191.0 2523.3h6.0V2634.1h-6.0zM1197.0 2533.1h6.0V2624.8h-6.0zM1203.0 2516.3h6.0V2631.4h-6.0zM1209.0 2526.6h6.0V2635.0h-6.0zM1215.0 2511.3h6.0V2609.2h-6.0zM1221.0 2508.9h6.0V2601.0h-6.0zM1227.0 2523.7h3.0V2614.6h-3.0zM1309 2557h11v11h-11zM1246 2606h11v11h-11zM1289 2589h11v11h-11zM1252 2574h11v11h-11zM1280 2629h11v11h-11zM1297 2579h11v11h-11zM1278 2551h11v11h-11zM1254 2561h11v11h-11zM1245 2600h11v11h-11zM1293 2601h11v11h-11zM1274 2586h11v11h-11zM1292 2587h11v11h-11zM1299 2571h11v11h-11zM1298 2584h11v11h-11zM1283 2629h11v11h-11zM1291 2548h11v11h-11zM1289 2600h11v11h-11zM1309 2620h11v11h-11zM1271 2620h11v11h-11zM1251 2588h11v11h-11zM1298 2594h11v11h-11zM1241 2596h11v11h-11zM1309 2629h11v11h-11zM1278 2599h11v11h-11zM1240 2586h11v11h-11zM1259 2629h11v11h-11zM1253 2580h11v11h-11zM1309 2575h11v11h-11zM1240 2545h11v11h-11zM1392 2689h11v11h-11zM1385 2689h11v11h-11zM1398 2674h11v11h-11zM1390 2613h11v11h-11zM1365 2673h11v11h-11zM1386 2589h11v11h-11zM1330 2586h11v11h-11zM1412 2602h11v11h-11zM1385 2689h11v11h-11zM1419 2604h11v11h-11zM1411 2634h11v11h-11zM1379 2612h11v11h-11zM1349 2613h11v11h-11zM1394 2628h11v11h-11zM1320 2617h11v11h-11zM1421 2684h11v11h-11zM1429 2573h11v11h-11zM1395 2663h11v11h-11zM1429 2602h11v11h-11zM1409 2596h11v11h-11zM1334 2575h11v11h-11zM1388 2609h11v11h-11zM1349 2560h11v11h-11zM1334 2574h11v11h-11zM1346 2643h11v11h-11zM1342 2689h11v11h-11zM1403 2607h11v11h-11zM1330 2648h11v11h-11zM1347 2614h11v11h-11zM1386 2639h11v11h-11zM1320 2669h11v11h-11zM1356 2601h11v11h-11zM1378 2644h11v11h-11zM1322 2689h11v11h-11zM1329 2689h11v11h-11zM1419 2689h11v11h-11zM1414 2603h11v11h-11zM1379 2650h11v11h-11zM1353 2577h11v11h-11zM1429 2671h11v11h-11zM1387 2631h11v11h-11zM1333 2615h11v11h-11zM1358 2658h11v11h-11zM1429 2580h11v11h-11zM1395 2561h11v11h-11zM1397 2642h11v11h-11zM1378 2561h11v11h-11zM1358 2663h11v11h-11zM1320 2599h11v11h-11zM1389 2583h11v11h-11zM1362 2584h11v11h-11zM1410 2589h11v11h-11zM1361 2631h11v11h-11zM1403 2664h11v11h-11zM1429 2643h11v11h-11zM1386 2635h11v11h-11zM1356 2587h11v11h-11zM1366 2686h11v11h-11zM1391 2637h11v11h-11zM1353 2653h11v11h-11zM1367 2606h11v11h-11zM1396 2655h11v11h-11zM1413 2606h11v11h-11zM1351 2679h11v11h-11zM1415 2583h11v11h-11zM1363 2617h11v11h-11zM1397 2590h11v11h-11zM1429 2573h11v11h-11zM1355 2646h11v11h-11zM1355 2603h11v11h-11zM1415 2689h11v11h-11zM1352 2689h11v11h-11zM1353 2689h11v11h-11zM1344 2666h11v11h-11zM1399 2601h11v11h-11zM1426 2573h11v11h-11zM1529 2582h11v11h-11zM1529 2626h11v11h-11zM1484 2610h11v11h-11zM1450 2661h11v11h-11zM1463 2640h11v11h-11zM1504 2669h11v11h-11zM1477 2669h11v11h-11zM1529 2609h11v11h-11zM1471 2585h11v11h-11zM1529 2562h11v11h-11zM1508 2610h11v11h-11zM1455 2668h11v11h-11zM1521 2592h11v11h-11zM1486 2569h11v11h-11zM1454 2665h11v11h-11zM1504 2636h11v11h-11zM1495 2589h11v11h-11zM1454 2563h11v11h-11zM1529 2560h11v11h-11zM1492 2630h11v11h-11zM1519 2584h11v11h-11zM1469 2573h11v11h-11zM1463 2669h11v11h-11zM1471 2621h11v11h-11zM1464 2669h11v11h-11zM1462 2659h11v11h-11zM1529 2669h11v11h-11zM1470 2643h11v11h-11zM1450 2669h11v11h-11zM1529 2641h11v11h-11zM1528 2669h11v11h-11zM1529 2669h11v11h-11zM1516 2603h11v11h-11zM1529 2636h11v11h-11zM1452 2646h11v11h-11zM1484 2649h11v11h-11zM1454 2635h11v11h-11zM1529 2644h11v11h-11zM1529 2642h11v11h-11zM1480 2649h11v11h-11zM1503 2635h11v11h-11zM1466 2602h11v11h-11zM1462 2606h11v11h-11zM1489 2656h11v11h-11zM1571 2649h11v11h-11zM1576 2649h11v11h-11zM1563 2649h11v11h-11zM1578 2647h11v11h-11zM1550 2649h11v11h-11zM1591 2610h11v11h-11zM1586 2621h11v11h-11zM1580 2649h11v11h-11zM1565 2649h11v11h-11zM1587 2649h11v11h-11zM1587 2617h11v11h-11zM1568 2649h11v11h-11zM1570 2615h11v11h-11zM1591 2649h11v11h-11zM1580 2632h11v11h-11zM1587 2612h11v11h-11zM1633 2597h11v11h-11zM1620 2573h11v11h-11zM1635 2603h11v11h-11zM1627 2580h11v11h-11zM1649 2596h11v11h-11zM1633 2587h11v11h-11zM1620 2567h11v11h-11zM1621 2571h11v11h-11zM1634 2610h11v11h-11zM1647 2589h11v11h-11zM1646 2591h11v11h-11zM1649 2626h11v11h-11zM1630 2591h11v11h-11zM1648 2597h11v11h-11zM1649 2560h11v11h-11zM1649 2581h11v11h-11zM1631 2560h11v11h-11zM1649 2581h11v11h-11zM1634 2581h11v11h-11zM1623 2602h11v11h-11zM1637 2579h11v11h-11zM1669 2626h11v11h-11zM1660 2639h11v11h-11zM1669 2593h11v11h-11zM1669 2599h11v11h-11zM1667 2615h11v11h-11zM1669 2590h11v11h-11zM1289 2768h11v11h-11zM1297 2742h11v11h-11zM1287 2666h11v11h-11zM1256 2735h11v11h-11zM1319 2763h11v11h-11zM1261 2688h11v11h-11zM1251 2681h11v11h-11zM1319 2789h11v11h-11zM1275 2763h11v11h-11zM1319 2789h11v11h-11zM1313 2758h11v11h-11zM1287 2789h11v11h-11zM1257 2789h11v11h-11zM1578 2713h11v11h-11zM1561 2702h11v11h-11zM1466 2777h11v11h-11zM1581 2757h11v11h-11zM1519 2691h11v11h-11zM1556 2757h11v11h-11zM1495 2809h11v11h-11zM1588 2697h11v11h-11zM1580 2680h11v11h-11zM1580 2711h11v11h-11zM1527 2809h11v11h-11zM1468 2807h11v11h-11zM1537 2808h11v11h-11zM1568 2749h11v11h-11zM1464 2808h11v11h-11zM1463 2781h11v11h-11zM1505 2763h11v11h-11zM1551 2702h11v11h-11zM1508 2745h11v11h-11zM1700.0 2391.8h6.0V2477.9h-6.0zM1706.0 2398.3h6.0V2475.1h-6.0zM1712.0 2400.6h6.0V2480.5h-6.0zM1718.0 2383.3h6.0V2485.5h-6.0zM1724.0 2404.8h6.0V2491.1h-6.0zM1730.0 2408.4h6.0V2499.3h-6.0zM1736.0 2421.8h6.0V2484.7h-6.0zM1742.0 2414.5h6.0V2489.6h-6.0zM1748.0 2431.1h6.0V2492.3h-6.0zM1704 2687h11v11h-11zM1707 2656h11v11h-11zM1734 2571h11v11h-11zM1725 2628h11v11h-11zM1704 2680h11v11h-11zM1715 2688h11v11h-11zM1704 2650h11v11h-11zM1731 2607h11v11h-11zM1734 2561h11v11h-11zM1734 2577h11v11h-11zM1734 2576h11v11h-11zM1734 2753h11v11h-11zM1723 2747h11v11h-11zM1734 2546h11v11h-11zM1718 2708h11v11h-11zM1705 2697h11v11h-11zM1729 2529h11v11h-11zM1734 2730h11v11h-11zM1734 2673h11v11h-11zM1704 2714h11v11h-11zM1734 2783h11v11h-11zM1734 2551h11v11h-11zM1725 2703h11v11h-11zM1734 2652h11v11h-11zM1717 2781h11v11h-11zM1712 2819h11v11h-11zM1734 2744h11v11h-11zM1727 2517h11v11h-11zM1734 2621h11v11h-11zM1718 2794h11v11h-11zM1706 2740h11v11h-11zM1725 2727h11v11h-11zM1722 2587h11v11h-11zM1704 2537h11v11h-11zM1710 2586h11v11h-11zM1734 2552h11v11h-11zM1709 2515h11v11h-11zM1734 2814h11v11h-11zM1726 2819h11v11h-11zM1732 2702h11v11h-11zM1719 2605h11v11h-11zM1704 2803h11v11h-11zM1734 2780h11v11h-11zM1734 2594h11v11h-11zM1730 2749h11v11h-11zM1724 2620h11v11h-11zM928.0 2386.8h5.0V2523.2h-5.0zM933.0 2392.1h5.0V2519.0h-5.0zM938.0 2383.3h5.0V2520.2h-5.0zM943.0 2375.7h5.0V2529.9h-5.0zM948.0 2384.9h5.0V2564.2h-5.0zM953.0 2386.1h5.0V2516.4h-5.0zM917 2411h11v11h-11zM917 2594h11v11h-11zM904 2489h11v11h-11zM917 2511h11v11h-11zM917 2494h11v11h-11zM915 2429h11v11h-11zM917 2597h11v11h-11zM917 2609h11v11h-11zM917 2591h11v11h-11zM916 2568h11v11h-11zM902 2458h11v11h-11zM909 2430h11v11h-11zM914 2609h11v11h-11zM917 2436h11v11h-11zM915 2520h11v11h-11zM910 2409h11v11h-11zM902 2493h11v11h-11zM917 2594h11v11h-11zM913 2584h11v11h-11zM916 2546h11v11h-11zM906 2596h11v11h-11zM902 2435h11v11h-11zM917 2548h11v11h-11zM947 2619h11v11h-11zM935 2566h11v11h-11zM936 2609h11v11h-11zM941 2576h11v11h-11zM943 2549h11v11h-11zM947 2601h11v11h-11zM947 2595h11v11h-11zM928 2599h11v11h-11zM1076 2464h11v11h-11zM1077 2464h11v11h-11zM1079 2614h11v11h-11zM1079 2614h11v11h-11z"/>
<rect x="2106.0" y="2337.0" width="1545.0" height="915.0" fill="#ebebeb" />
<rect x="2106.0" y="3067.3" width="1545.0" height="5.0" fill="#f1f1f1" />
<rect x="2106.0" y="2783.0" width="1545.0" height="5.0" fill="#f1f1f1" />
<rect x="2106.0" y="2498.6" width="1545.0" height="5.0" fill="#f1f1f1" />
<rect x="2106.0" y="3209.5" width="1545.0" height="5.0" fill="#f8f8f8" />
<rect x="2106.0" y="2925.2" width="1545.0" height="5.0" fill="#f8f8f8" />
<rect x="2106.0" y="2640.8" width="1545.0" height="5.0" fill="#f8f8f8" />
<rect x="2106.0" y="2356.4" width="1545.0" height="5.0" fill="#f8f8f8" />
<rect x="2367.8" y="2337.0" width="5.0" height="915.0" fill="#f1f1f1" />
<rect x="2707.2" y="2337.0" width="5.0" height="915.0" fill="#f1f1f1" />
<rect x="3046.8" y="2337.0" width="5.0" height="915.0" fill="#f1f1f1" />
<rect x="3386.2" y="2337.0" width="5.0" height="915.0" fill="#f1f1f1" />
<rect x="2198.0" y="2337.0" width="5.0" height="915.0" fill="#f8f8f8" />
<rect x="2537.5" y="2337.0" width="5.0" height="915.0" fill="#f8f8f8" />
<rect x="2877.0" y="2337.0" width="5.0" height="915.0" fill="#f8f8f8" />
<rect x="3216.5" y="2337.0" width="5.0" height="915.0" fill="#f8f8f8" />
<rect x="3556.0" y="2337.0" width="5.0" height="915.0" fill="#f8f8f8" />
<text x="2095.0" y="3224.0" font-size="30.71" fill="#a3a3a3" text-anchor="end" textLength="10.9" lengthAdjust="spacingAndGlyphs" >0</text>
<rect x="2095.0" y="3209.5" width="11.0" height="5.0" fill="#9d9d9d" />
<text x="2095.0" y="2939.7" font-size="30.71" fill="#a3a3a3" text-anchor="end" textLength="56.5" lengthAdjust="spacingAndGlyphs" >50,000</text>
<rect x="2095.0" y="2925.2" width="11.0" height="5.0" fill="#9d9d9d" />
<text x="2095.0" y="2655.3" font-size="30.71" fill="#a3a3a3" text-anchor="end" textLength="66.9" lengthAdjust="spacingAndGlyphs" >100,000</text>
<rect x="2095.0" y="2640.8" width="11.0" height="5.0" fill="#9d9d9d" />
<text x="2095.0" y="2370.9" font-size="30.71" fill="#a3a3a3" text-anchor="end" textLength="66.9" lengthAdjust="spacingAndGlyphs" >150,000</text>
<rect x="2095.0" y="2356.4" width="11.0" height="5.0" fill="#9d9d9d" />
<rect x="2198.0" y="3252.0" width="5.0" height="11.0" fill="#9d9d9d" />
<text x="2200.5" y="3291.0" font-size="30.71" fill="#a3a3a3" text-anchor="middle" textLength="10.9" lengthAdjust="spacingAndGlyphs" >0</text>
<rect x="2537.5" y="3252.0" width="5.0" height="11.0" fill="#9d9d9d" />
<text x="2540.0" y="3291.0" font-size="30.71" fill="#a3a3a3" text-anchor="middle" textLength="43.6" lengthAdjust="spacingAndGlyphs" >1000</text>
<rect x="2877.0" y="3252.0" width="5.0" height="11.0" fill="#9d9d9d" />
<text x="2879.5" y="3291.0" font-size="30.71" fill="#a3a3a3" text-anchor="middle" textLength="43.6" lengthAdjust="spacingAndGlyphs" >2000</text>
<rect x="3216.5" y="3252.0" width="5.0" height="11.0" fill="#9d9d9d" />
<text x="3219.0" y="3291.0" font-size="30.71" fill="#a3a3a3" text-anchor="middle" textLength="43.6" lengthAdjust="spacingAndGlyphs" >3000</text>
<rect x="3556.0" y="3252.0" width="5.0" height="11.0" fill="#9d9d9d" />
<text x="3558.5" y="3291.0" font-size="30.71" fill="#a3a3a3" text-anchor="middle" textLength="43.6" lengthAdjust="spacingAndGlyphs" >4000</text>
<rect x="2177.1" y="2377.0" width="46.8" height="837.5" fill="#03972f" fill-opacity="0.71"/>
<rect x="2179.1" y="2379.0" width="42.8" height="833.5" fill="none" stroke="#03972f" stroke-width="4" stroke-opacity="0.6"/>
<rect x="2223.9" y="3123.5" width="46.8" height="91.0" fill="#03972f" fill-opacity="0.71"/>
<rect x="2225.9" y="3125.5" width="42.8" height="87.0" fill="none" stroke="#03972f" stroke-width="4" stroke-opacity="0.6"/>
<rect x="2270.7" y="3079.5" width="46.8" height="135.0" fill="#03972f" fill-opacity="0.71"/>
<rect x="2272.7" y="3081.5" width="42.8" height="131.0" fill="none" stroke="#03972f" stroke-width="4" stroke-opacity="0.6"/>
<rect x="2317.4" y="3036.0" width="46.8" height="178.5" fill="#03972f" fill-opacity="0.71"/>
<rect x="2319.4" y="3038.0" width="42.8" height="174.5" fill="none" stroke="#03972f" stroke-width="4" stroke-opacity="0.6"/>
<rect x="2364.2" y="2977.5" width="46.8" height="237.0" fill="#03972f" fill-opacity="0.71"/>
<rect x="2366.2" y="2979.5" width="42.8" height="233.0" fill="none" stroke="#03972f" stroke-width="4" stroke-opacity="0.6"/>
<rect x="2411.0" y="2977.0" width="46.8" height="237.5" fill="#03972f" fill-opacity="0.71"/>
<rect x="2413.0" y="2979.0" width="42.8" height="233.5" fill="none" stroke="#03972f" stroke-width="4" stroke-opacity="0.6"/>
<rect x="2457.8" y="2999.5" width="46.8" height="215.0" fill="#03972f" fill-opacity="0.71"/>
<rect x="2459.8" y="3001.5" width="42.8" height="211.0" fill="none" stroke="#03972f" stroke-width="4" stroke-opacity="0.6"/>
<rect x="2504.6" y="3069.0" width="46.8" height="145.5" fill="#03972f" fill-opacity="0.71"/>
<rect x="2506.6" y="3071.0" width="42.8" height="141.5" fill="none" stroke="#03972f" stroke-width="4" stroke-opacity="0.6"/>
<rect x="2551.3" y="2977.0" width="46.8" height="237.5" fill="#03972f" fill-opacity="0.71"/>
<rect x="2553.3" y="2979.0" width="42.8" height="233.5" fill="none" stroke="#03972f" stroke-width="4" stroke-opacity="0.6"/>
<rect x="2598.1" y="3034.0" width="46.8" height="180.5" fill="#03972f" fill-opacity="0.71"/>
<rect x="2600.1" y="3036.0" width="42.8" height="176.5" fill="none" stroke="#03972f" stroke-width="4" stroke-opacity="0.6"/>
<rect x="2644.9" y="3065.0" width="46.8" height="149.5" fill="#03972f" fill-opacity="0.71"/>
<rect x="2646.9" y="3067.0" width="42.8" height="145.5" fill="none" stroke="#03972f" stroke-width="4" stroke-opacity="0.6"/>
<rect x="2691.7" y="3080.0" width="46.8" height="134.5" fill="#03972f" fill-opacity="0.71"/>
<rect x="2693.7" y="3082.0" width="42.8" height="130.5" fill="none" stroke="#03972f" stroke-width="4" stroke-opacity="0.6"/>
<rect x="2738.5" y="3102.0" width="46.8" height="112.5" fill="#03972f" fill-opacity="0.71"/>
<rect x="2740.5" y="3104.0" width="42.8" height="108.5" fill="none" stroke="#03972f" stroke-width="4" stroke-opacity="0.6"/>
<rect x="2785.2" y="3141.0" width="46.8" height="73.5" fill="#03972f" fill-opacity="0.71"/>
<rect x="2787.2" y="3143.0" width="42.8" height="69.5" fill="none" stroke="#03972f" stroke-width="4" stroke-opacity="0.6"/>
<rect x="2832.0" y="3167.0" width="46.8" height="47.5" fill="#03972f" fill-opacity="0.71"/>
<rect x="2834.0" y="3169.0" width="42.8" height="43.5" fill="none" stroke="#03972f" stroke-width="4" stroke-opacity="0.6"/>
<rect x="2878.8" y="3188.0" width="46.8" height="26.5" fill="#03972f" fill-opacity="0.71"/>
<rect x="2880.8" y="3190.0" width="42.8" height="22.5" fill="none" stroke="#03972f" stroke-width="4" stroke-opacity="0.6"/>
<rect x="2925.6" y="3194.6" width="46.8" height="19.9" fill="#03972f" fill-opacity="0.71"/>
<rect x="2927.6" y="3196.6" width="42.8" height="15.9" fill="none" stroke="#03972f" stroke-width="4" stroke-opacity="0.6"/>
<rect x="2972.4" y="3200.0" width="46.8" height="14.5" fill="#03972f" fill-opacity="0.71"/>
<rect x="2974.4" y="3202.0" width="42.8" height="10.5" fill="none" stroke="#03972f" stroke-width="4" stroke-opacity="0.6"/>
<rect x="3019.1" y="3201.0" width="46.8" height="13.5" fill="#03972f" fill-opacity="0.71"/>
<rect x="3021.1" y="3203.0" width="42.8" height="9.5" fill="none" stroke="#03972f" stroke-width="4" stroke-opacity="0.6"/>
<rect x="3065.9" y="3205.6" width="46.8" height="8.9" fill="#03972f" fill-opacity="0.71"/>
<rect x="3067.9" y="3207.6" width="42.8" height="4.9" fill="none" stroke="#03972f" stroke-width="4" stroke-opacity="0.6"/>
<rect x="3112.7" y="3206.7" width="46.8" height="7.8" fill="#03972f" fill-opacity="0.71"/>
<rect x="3114.7" y="3208.7" width="42.8" height="3.8" fill="none" stroke="#03972f" stroke-width="4" stroke-opacity="0.6"/>
<rect x="3159.5" y="3208.0" width="46.8" height="6.5" fill="#03972f" fill-opacity="0.71"/>
<rect x="3161.5" y="3210.0" width="42.8" height="2.5" fill="none" stroke="#03972f" stroke-width="4" stroke-opacity="0.6"/>
<rect x="3206.3" y="3210.0" width="46.8" height="4.5" fill="#03972f" fill-opacity="0.71"/>
<rect x="3208.3" y="3212.0" width="42.8" height="0.5" fill="none" stroke="#03972f" stroke-width="4" stroke-opacity="0.6"/>
<rect x="3253.0" y="3210.0" width="46.8" height="4.5" fill="#03972f" fill-opacity="0.71"/>
<rect x="3255.0" y="3212.0" width="42.8" height="0.5" fill="none" stroke="#03972f" stroke-width="4" stroke-opacity="0.6"/>
<rect x="3299.8" y="3204.0" width="46.8" height="10.5" fill="#03972f" fill-opacity="0.71"/>
<rect x="3301.8" y="3206.0" width="42.8" height="6.5" fill="none" stroke="#03972f" stroke-width="4" stroke-opacity="0.6"/>
<rect x="3346.6" y="3200.0" width="46.8" height="14.5" fill="#03972f" fill-opacity="0.71"/>
<rect x="3348.6" y="3202.0" width="42.8" height="10.5" fill="none" stroke="#03972f" stroke-width="4" stroke-opacity="0.6"/>
<rect x="3393.4" y="3145.0" width="46.8" height="69.5" fill="#03972f" fill-opacity="0.71"/>
<rect x="3395.4" y="3147.0" width="42.8" height="65.5" fill="none" stroke="#03972f" stroke-width="4" stroke-opacity="0.6"/>
<rect x="3440.2" y="3167.0" width="46.8" height="47.5" fill="#03972f" fill-opacity="0.71"/>
<rect x="3442.2" y="3169.0" width="42.8" height="43.5" fill="none" stroke="#03972f" stroke-width="4" stroke-opacity="0.6"/>
<rect x="3486.9" y="3204.5" width="46.8" height="10.0" fill="#03972f" fill-opacity="0.71"/>
<rect x="3488.9" y="3206.5" width="42.8" height="6.0" fill="none" stroke="#03972f" stroke-width="4" stroke-opacity="0.6"/>
<rect x="3533.7" y="3210.0" width="46.8" height="4.5" fill="#03972f" fill-opacity="0.71"/>
<rect x="3535.7" y="3212.0" width="42.8" height="0.5" fill="none" stroke="#03972f" stroke-width="4" stroke-opacity="0.6"/>
<text x="2106.0" y="2315.0" font-size="39.00" fill="#4a4a4a" text-anchor="start" textLength="503.0" lengthAdjust="spacingAndGlyphs" >UG6 - Var:Corrente_Armadura</text>
<text x="2880.5" y="3333.7" font-size="36.50" fill="#666666" text-anchor="middle" textLength="271.0" lengthAdjust="spacingAndGlyphs" >Corrente_Armadura</text></svg>
<div style="position:absolute;left:74px;top:3225px;width:3662px;height:157px;background:linear-gradient(to bottom, rgba(0,0,0,0) 0%, rgba(20,30,40,0.07) 100%);-webkit-mask-image:linear-gradient(to right, #000 0px, #000 2500px, rgba(0,0,0,0) 3150px);mask-image:linear-gradient(to right, #000 0px, #000 2500px, rgba(0,0,0,0) 3150px);"></div>
</body></html>
